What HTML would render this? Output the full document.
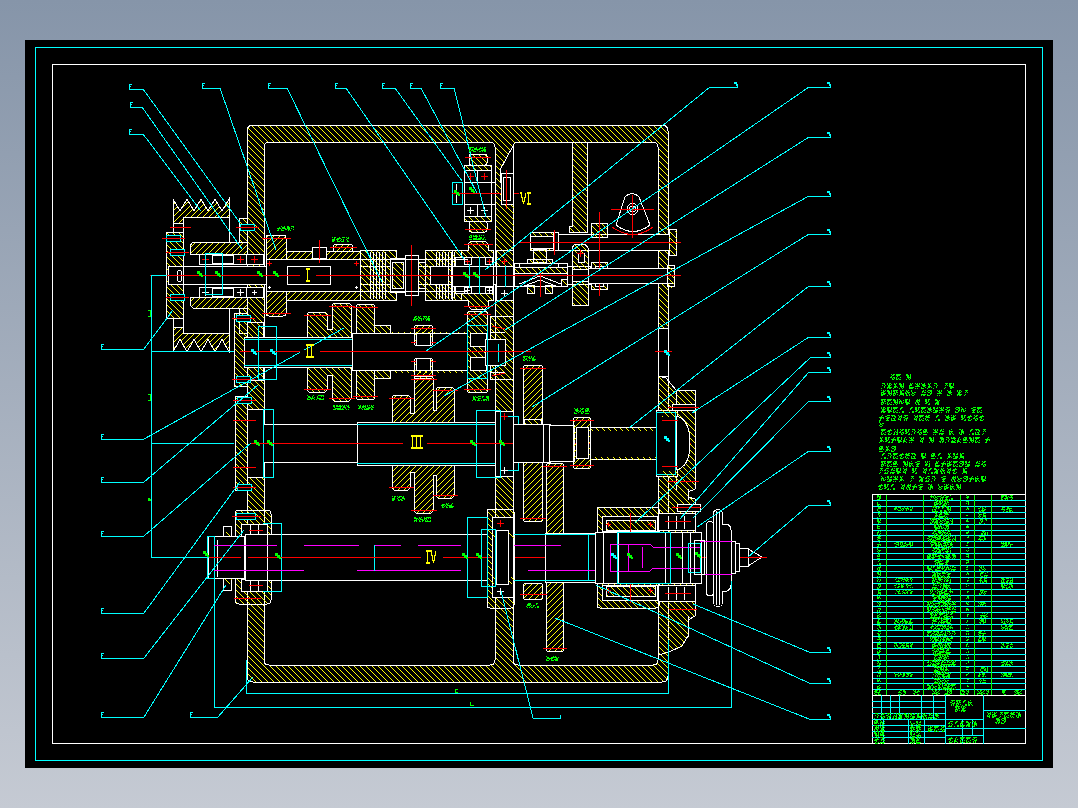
<!DOCTYPE html>
<html><head><meta charset="utf-8"><style>
html,body{margin:0;padding:0;width:1078px;height:808px;overflow:hidden;background:linear-gradient(to bottom,#8695a9 0%,#c5cad3 100%);}
svg{position:absolute;left:0;top:0;}
text{font-family:"Liberation Sans",sans-serif;}
</style></head><body>
<svg width="1078" height="808" viewBox="0 0 1078 808" shape-rendering="crispEdges">
<defs>
<pattern id="h" patternUnits="userSpaceOnUse" width="6" height="6"><rect x="0" y="0" width="1" height="1" fill="#ffff00"/><rect x="1" y="1" width="1" height="1" fill="#ffff00"/><rect x="2" y="2" width="1" height="1" fill="#ffff00"/><rect x="3" y="3" width="1" height="1" fill="#ffff00"/><rect x="4" y="4" width="1" height="1" fill="#ffff00"/><rect x="5" y="5" width="1" height="1" fill="#ffff00"/></pattern><pattern id="g" patternUnits="userSpaceOnUse" width="6" height="6"><rect x="5" y="0" width="1" height="1" fill="#ffff00"/><rect x="4" y="1" width="1" height="1" fill="#ffff00"/><rect x="3" y="2" width="1" height="1" fill="#ffff00"/><rect x="2" y="3" width="1" height="1" fill="#ffff00"/><rect x="1" y="4" width="1" height="1" fill="#ffff00"/><rect x="0" y="5" width="1" height="1" fill="#ffff00"/></pattern>
<path id="g0" d="M1 0h1v1h-1zM3 0h1v1h-1zM1 1h1v1h-1zM2 1h1v1h-1zM0 2h1v1h-1zM1 2h1v1h-1zM2 2h1v1h-1zM0 3h1v1h-1zM0 4h1v1h-1zM1 4h1v1h-1zM2 4h1v1h-1zM3 4h1v1h-1zM4 4h1v1h-1zM0 5h1v1h-1zM1 5h1v1h-1zM2 5h1v1h-1zM3 5h1v1h-1z" fill="#00ff00"/><path id="g1" d="M2 0h1v1h-1zM0 1h1v1h-1zM0 2h1v1h-1zM1 2h1v1h-1zM2 2h1v1h-1zM3 2h1v1h-1zM0 3h1v1h-1zM2 3h1v1h-1zM0 4h1v1h-1zM1 4h1v1h-1zM3 4h1v1h-1zM0 5h1v1h-1zM1 5h1v1h-1zM4 5h1v1h-1z" fill="#00ff00"/><path id="g2" d="M0 0h1v1h-1zM1 0h1v1h-1zM4 0h1v1h-1zM0 1h1v1h-1zM1 1h1v1h-1zM2 1h1v1h-1zM4 1h1v1h-1zM1 2h1v1h-1zM2 2h1v1h-1zM4 2h1v1h-1zM1 3h1v1h-1zM2 3h1v1h-1zM3 3h1v1h-1zM4 3h1v1h-1zM2 4h1v1h-1zM4 4h1v1h-1zM0 5h1v1h-1zM3 5h1v1h-1z" fill="#00ff00"/><path id="g3" d="M0 0h1v1h-1zM1 0h1v1h-1zM3 0h1v1h-1zM4 0h1v1h-1zM0 1h1v1h-1zM1 1h1v1h-1zM3 1h1v1h-1zM0 2h1v1h-1zM1 2h1v1h-1zM3 2h1v1h-1zM1 3h1v1h-1zM2 3h1v1h-1zM0 4h1v1h-1zM1 4h1v1h-1zM4 4h1v1h-1zM3 5h1v1h-1zM4 5h1v1h-1z" fill="#00ff00"/><path id="g4" d="M0 0h1v1h-1zM2 0h1v1h-1zM4 0h1v1h-1zM2 1h1v1h-1zM3 1h1v1h-1zM0 2h1v1h-1zM1 2h1v1h-1zM2 2h1v1h-1zM0 3h1v1h-1zM2 3h1v1h-1zM3 3h1v1h-1zM4 3h1v1h-1zM0 4h1v1h-1zM1 4h1v1h-1zM2 4h1v1h-1zM3 4h1v1h-1zM0 5h1v1h-1zM1 5h1v1h-1z" fill="#00ff00"/><path id="g5" d="M2 0h1v1h-1zM3 0h1v1h-1zM4 0h1v1h-1zM3 1h1v1h-1zM2 2h1v1h-1zM4 2h1v1h-1zM2 4h1v1h-1zM1 5h1v1h-1z" fill="#00ff00"/><path id="g6" d="M1 0h1v1h-1zM4 0h1v1h-1zM4 1h1v1h-1zM2 2h1v1h-1zM4 2h1v1h-1zM1 3h1v1h-1zM3 3h1v1h-1zM4 3h1v1h-1zM1 4h1v1h-1zM4 4h1v1h-1zM0 5h1v1h-1zM1 5h1v1h-1zM3 5h1v1h-1zM4 5h1v1h-1z" fill="#00ff00"/><path id="g7" d="M2 0h1v1h-1zM4 0h1v1h-1zM1 1h1v1h-1zM2 1h1v1h-1zM1 2h1v1h-1zM3 2h1v1h-1zM4 2h1v1h-1zM0 4h1v1h-1zM1 4h1v1h-1zM2 4h1v1h-1zM3 4h1v1h-1zM4 4h1v1h-1zM0 5h1v1h-1zM2 5h1v1h-1zM3 5h1v1h-1z" fill="#00ff00"/><path id="g8" d="M1 0h1v1h-1zM2 0h1v1h-1zM3 0h1v1h-1zM0 1h1v1h-1zM2 1h1v1h-1zM3 1h1v1h-1zM0 2h1v1h-1zM1 2h1v1h-1zM2 2h1v1h-1zM3 2h1v1h-1zM0 3h1v1h-1zM1 3h1v1h-1zM2 3h1v1h-1zM4 3h1v1h-1zM0 5h1v1h-1zM1 5h1v1h-1zM2 5h1v1h-1zM3 5h1v1h-1z" fill="#00ff00"/><path id="g9" d="M1 0h1v1h-1zM2 0h1v1h-1zM3 0h1v1h-1zM3 1h1v1h-1zM1 2h1v1h-1zM4 2h1v1h-1zM3 3h1v1h-1zM3 4h1v1h-1zM0 5h1v1h-1z" fill="#00ff00"/><path id="g10" d="M0 0h1v1h-1zM1 1h1v1h-1zM4 1h1v1h-1zM0 2h1v1h-1zM1 2h1v1h-1zM2 2h1v1h-1zM0 3h1v1h-1zM2 3h1v1h-1zM4 3h1v1h-1zM0 4h1v1h-1zM2 4h1v1h-1zM3 4h1v1h-1z" fill="#00ff00"/><path id="g11" d="M1 0h1v1h-1zM2 0h1v1h-1zM3 0h1v1h-1zM4 0h1v1h-1zM2 1h1v1h-1zM0 2h1v1h-1zM1 2h1v1h-1zM4 2h1v1h-1zM2 3h1v1h-1zM3 3h1v1h-1zM4 3h1v1h-1zM1 4h1v1h-1zM3 4h1v1h-1zM1 5h1v1h-1zM3 5h1v1h-1z" fill="#00ff00"/><path id="g12" d="M1 0h1v1h-1zM2 0h1v1h-1zM3 0h1v1h-1zM1 1h1v1h-1zM2 1h1v1h-1zM3 1h1v1h-1zM4 1h1v1h-1zM2 2h1v1h-1zM3 2h1v1h-1zM4 2h1v1h-1zM2 3h1v1h-1zM4 3h1v1h-1zM0 4h1v1h-1zM1 4h1v1h-1zM3 4h1v1h-1zM4 4h1v1h-1zM1 5h1v1h-1zM3 5h1v1h-1z" fill="#00ff00"/><path id="g13" d="M0 0h1v1h-1zM1 0h1v1h-1zM2 0h1v1h-1zM3 0h1v1h-1zM4 0h1v1h-1zM0 1h1v1h-1zM1 1h1v1h-1zM2 1h1v1h-1zM3 1h1v1h-1zM1 2h1v1h-1zM0 3h1v1h-1zM4 3h1v1h-1zM0 4h1v1h-1zM2 4h1v1h-1zM0 5h1v1h-1zM1 5h1v1h-1zM3 5h1v1h-1zM4 5h1v1h-1z" fill="#00ff00"/><path id="g14" d="M1 0h1v1h-1zM3 0h1v1h-1zM4 0h1v1h-1zM1 1h1v1h-1zM2 1h1v1h-1zM1 2h1v1h-1zM2 2h1v1h-1zM1 3h1v1h-1zM2 3h1v1h-1zM3 3h1v1h-1zM4 3h1v1h-1zM1 4h1v1h-1zM2 4h1v1h-1zM3 4h1v1h-1zM4 4h1v1h-1zM0 5h1v1h-1zM4 5h1v1h-1z" fill="#00ff00"/><path id="g15" d="M0 0h1v1h-1zM2 0h1v1h-1zM4 0h1v1h-1zM1 1h1v1h-1zM2 1h1v1h-1zM4 1h1v1h-1zM2 2h1v1h-1zM3 2h1v1h-1zM0 3h1v1h-1zM1 3h1v1h-1zM2 3h1v1h-1zM3 3h1v1h-1zM4 3h1v1h-1zM0 5h1v1h-1zM2 5h1v1h-1z" fill="#00ff00"/><path id="g16" d="M0 0h1v1h-1zM0 1h1v1h-1zM1 2h1v1h-1zM3 2h1v1h-1zM4 2h1v1h-1zM1 3h1v1h-1zM2 3h1v1h-1zM0 4h1v1h-1zM3 4h1v1h-1zM1 5h1v1h-1zM2 5h1v1h-1z" fill="#00ff00"/><path id="g17" d="M3 0h1v1h-1zM1 1h1v1h-1zM2 1h1v1h-1zM3 1h1v1h-1zM4 1h1v1h-1zM0 2h1v1h-1zM1 2h1v1h-1zM2 2h1v1h-1zM2 3h1v1h-1zM1 4h1v1h-1zM4 4h1v1h-1zM1 5h1v1h-1zM2 5h1v1h-1zM3 5h1v1h-1z" fill="#00ff00"/><path id="g18" d="M1 0h1v1h-1zM3 0h1v1h-1zM1 1h1v1h-1zM2 1h1v1h-1zM0 2h1v1h-1zM2 2h1v1h-1zM3 2h1v1h-1zM4 2h1v1h-1zM0 3h1v1h-1zM1 3h1v1h-1zM3 3h1v1h-1zM1 4h1v1h-1zM4 4h1v1h-1zM1 5h1v1h-1zM2 5h1v1h-1zM4 5h1v1h-1z" fill="#00ff00"/><path id="g19" d="M3 0h1v1h-1zM2 1h1v1h-1zM0 2h1v1h-1zM1 2h1v1h-1zM2 2h1v1h-1zM3 2h1v1h-1zM4 2h1v1h-1zM1 3h1v1h-1zM2 3h1v1h-1zM4 3h1v1h-1zM1 4h1v1h-1zM0 5h1v1h-1zM1 5h1v1h-1z" fill="#00ff00"/><path id="g20" d="M0 0h1v1h-1zM1 0h1v1h-1zM3 0h1v1h-1zM2 1h1v1h-1zM3 1h1v1h-1zM2 2h1v1h-1zM3 2h1v1h-1zM4 2h1v1h-1zM0 3h1v1h-1zM2 3h1v1h-1zM3 3h1v1h-1zM4 3h1v1h-1zM0 4h1v1h-1zM2 4h1v1h-1zM4 4h1v1h-1zM1 5h1v1h-1zM2 5h1v1h-1z" fill="#00ff00"/><path id="g21" d="M0 0h1v1h-1zM1 0h1v1h-1zM0 1h1v1h-1zM1 1h1v1h-1zM2 1h1v1h-1zM4 1h1v1h-1zM2 2h1v1h-1zM3 2h1v1h-1zM1 3h1v1h-1zM2 3h1v1h-1zM3 3h1v1h-1zM0 4h1v1h-1zM1 4h1v1h-1zM2 4h1v1h-1zM3 4h1v1h-1zM0 5h1v1h-1zM2 5h1v1h-1zM3 5h1v1h-1z" fill="#00ff00"/><path id="g22" d="M0 0h1v1h-1zM1 0h1v1h-1zM4 0h1v1h-1zM0 1h1v1h-1zM1 1h1v1h-1zM3 1h1v1h-1zM4 1h1v1h-1zM1 2h1v1h-1zM0 3h1v1h-1zM2 3h1v1h-1zM3 3h1v1h-1zM4 3h1v1h-1zM2 4h1v1h-1zM3 4h1v1h-1zM4 4h1v1h-1zM0 5h1v1h-1zM1 5h1v1h-1zM2 5h1v1h-1zM3 5h1v1h-1z" fill="#00ff00"/><path id="g23" d="M1 0h1v1h-1zM3 0h1v1h-1zM4 0h1v1h-1zM2 1h1v1h-1zM3 1h1v1h-1zM1 2h1v1h-1zM0 3h1v1h-1zM1 3h1v1h-1zM3 3h1v1h-1zM4 3h1v1h-1zM2 4h1v1h-1zM4 4h1v1h-1zM2 5h1v1h-1zM3 5h1v1h-1z" fill="#00ff00"/><path id="g24" d="M2 0h1v1h-1zM3 0h1v1h-1zM1 1h1v1h-1zM2 1h1v1h-1zM1 2h1v1h-1zM3 4h1v1h-1zM4 4h1v1h-1zM0 5h1v1h-1zM3 5h1v1h-1zM4 5h1v1h-1z" fill="#00ff00"/><path id="g25" d="M0 0h1v1h-1zM1 0h1v1h-1zM2 0h1v1h-1zM4 0h1v1h-1zM0 1h1v1h-1zM1 1h1v1h-1zM4 1h1v1h-1zM0 2h1v1h-1zM1 2h1v1h-1zM4 2h1v1h-1zM0 3h1v1h-1zM1 3h1v1h-1zM2 3h1v1h-1zM3 3h1v1h-1zM1 4h1v1h-1zM2 4h1v1h-1zM3 4h1v1h-1zM4 4h1v1h-1zM1 5h1v1h-1zM2 5h1v1h-1z" fill="#00ff00"/><path id="g26" d="M0 0h1v1h-1zM3 0h1v1h-1zM1 1h1v1h-1zM2 1h1v1h-1zM3 1h1v1h-1zM1 2h1v1h-1zM2 2h1v1h-1zM3 2h1v1h-1zM4 2h1v1h-1zM2 3h1v1h-1zM3 3h1v1h-1zM0 4h1v1h-1zM4 4h1v1h-1zM0 5h1v1h-1zM1 5h1v1h-1zM2 5h1v1h-1z" fill="#00ff00"/><path id="g27" d="M2 0h1v1h-1zM3 0h1v1h-1zM4 0h1v1h-1zM1 1h1v1h-1zM0 2h1v1h-1zM1 2h1v1h-1zM3 2h1v1h-1zM4 3h1v1h-1zM1 4h1v1h-1zM3 4h1v1h-1zM0 5h1v1h-1zM1 5h1v1h-1zM2 5h1v1h-1zM3 5h1v1h-1z" fill="#00ff00"/><path id="g28" d="M0 0h1v1h-1zM1 0h1v1h-1zM2 0h1v1h-1zM3 0h1v1h-1zM1 1h1v1h-1zM3 1h1v1h-1zM4 1h1v1h-1zM4 2h1v1h-1zM0 3h1v1h-1zM2 3h1v1h-1zM3 3h1v1h-1zM0 4h1v1h-1zM3 4h1v1h-1zM0 5h1v1h-1zM1 5h1v1h-1zM2 5h1v1h-1zM3 5h1v1h-1zM4 5h1v1h-1z" fill="#00ff00"/><path id="g29" d="M0 0h1v1h-1zM2 0h1v1h-1zM3 0h1v1h-1zM0 1h1v1h-1zM2 1h1v1h-1zM4 1h1v1h-1zM1 2h1v1h-1zM2 2h1v1h-1zM3 2h1v1h-1zM1 3h1v1h-1zM2 3h1v1h-1zM0 4h1v1h-1zM1 4h1v1h-1zM2 4h1v1h-1zM3 4h1v1h-1zM4 4h1v1h-1zM0 5h1v1h-1zM2 5h1v1h-1zM3 5h1v1h-1z" fill="#00ff00"/><path id="g30" d="M2 0h1v1h-1zM3 0h1v1h-1zM4 0h1v1h-1zM0 1h1v1h-1zM1 1h1v1h-1zM2 2h1v1h-1zM3 2h1v1h-1zM4 2h1v1h-1zM1 3h1v1h-1zM2 3h1v1h-1zM3 3h1v1h-1zM2 4h1v1h-1zM1 5h1v1h-1zM2 5h1v1h-1zM3 5h1v1h-1z" fill="#00ff00"/><path id="g31" d="M1 0h1v1h-1zM4 0h1v1h-1zM2 1h1v1h-1zM3 1h1v1h-1zM4 1h1v1h-1zM2 2h1v1h-1zM4 2h1v1h-1zM1 3h1v1h-1zM3 3h1v1h-1zM1 4h1v1h-1zM2 4h1v1h-1zM3 4h1v1h-1zM3 5h1v1h-1z" fill="#00ff00"/><path id="g32" d="M0 0h1v1h-1zM2 0h1v1h-1zM3 0h1v1h-1zM0 1h1v1h-1zM1 1h1v1h-1zM2 1h1v1h-1zM3 1h1v1h-1zM4 1h1v1h-1zM3 2h1v1h-1zM1 3h1v1h-1zM4 3h1v1h-1zM0 4h1v1h-1zM1 4h1v1h-1zM2 4h1v1h-1zM3 4h1v1h-1zM0 5h1v1h-1zM1 5h1v1h-1zM2 5h1v1h-1zM3 5h1v1h-1zM4 5h1v1h-1z" fill="#00ff00"/><path id="g33" d="M1 0h1v1h-1zM3 0h1v1h-1zM1 1h1v1h-1zM2 1h1v1h-1zM2 2h1v1h-1zM1 3h1v1h-1zM2 3h1v1h-1zM3 3h1v1h-1zM1 4h1v1h-1zM2 4h1v1h-1zM4 4h1v1h-1zM0 5h1v1h-1z" fill="#00ff00"/><path id="g34" d="M1 0h1v1h-1zM3 0h1v1h-1zM4 0h1v1h-1zM0 1h1v1h-1zM1 1h1v1h-1zM2 1h1v1h-1zM3 1h1v1h-1zM1 2h1v1h-1zM2 2h1v1h-1zM3 2h1v1h-1zM4 2h1v1h-1zM0 3h1v1h-1zM0 4h1v1h-1zM2 4h1v1h-1zM1 5h1v1h-1zM3 5h1v1h-1z" fill="#00ff00"/><path id="g35" d="M1 0h1v1h-1zM2 0h1v1h-1zM3 0h1v1h-1zM4 0h1v1h-1zM0 1h1v1h-1zM3 1h1v1h-1zM4 1h1v1h-1zM1 2h1v1h-1zM2 2h1v1h-1zM4 2h1v1h-1zM3 3h1v1h-1zM4 3h1v1h-1zM0 4h1v1h-1zM3 4h1v1h-1zM0 5h1v1h-1zM1 5h1v1h-1zM2 5h1v1h-1z" fill="#00ff00"/><path id="g36" d="M0 0h1v1h-1zM2 0h1v1h-1zM4 0h1v1h-1zM0 1h1v1h-1zM2 1h1v1h-1zM1 2h1v1h-1zM4 2h1v1h-1zM0 3h1v1h-1zM1 3h1v1h-1zM2 3h1v1h-1zM4 3h1v1h-1zM0 4h1v1h-1zM1 4h1v1h-1zM4 4h1v1h-1zM3 5h1v1h-1zM4 5h1v1h-1z" fill="#00ff00"/><path id="g37" d="M2 0h1v1h-1zM4 0h1v1h-1zM1 1h1v1h-1zM2 1h1v1h-1zM3 1h1v1h-1zM4 1h1v1h-1zM1 2h1v1h-1zM2 2h1v1h-1zM4 2h1v1h-1zM0 3h1v1h-1zM2 3h1v1h-1zM3 3h1v1h-1zM0 4h1v1h-1zM3 4h1v1h-1zM1 5h1v1h-1zM3 5h1v1h-1zM4 5h1v1h-1z" fill="#00ff00"/><path id="g38" d="M2 0h1v1h-1zM1 1h1v1h-1zM1 2h1v1h-1zM3 2h1v1h-1zM0 3h1v1h-1zM1 3h1v1h-1zM0 4h1v1h-1zM1 4h1v1h-1zM2 4h1v1h-1zM0 5h1v1h-1zM3 5h1v1h-1z" fill="#00ff00"/><path id="g39" d="M0 0h1v1h-1zM1 0h1v1h-1zM2 0h1v1h-1zM3 0h1v1h-1zM4 0h1v1h-1zM0 1h1v1h-1zM1 1h1v1h-1zM3 1h1v1h-1zM1 2h1v1h-1zM3 2h1v1h-1zM4 2h1v1h-1zM0 3h1v1h-1zM1 3h1v1h-1zM2 3h1v1h-1zM0 4h1v1h-1zM2 4h1v1h-1zM4 4h1v1h-1zM0 5h1v1h-1zM1 5h1v1h-1z" fill="#00ff00"/>
</defs>
<rect x="25" y="40" width="1028" height="728" fill="#000"/>
<rect x="35.5" y="47.5" width="1007" height="713" fill="none" stroke="#00ffff" stroke-width="1"/>
<rect x="52.5" y="64.5" width="973" height="679" fill="none" stroke="#ffffff" stroke-width="1"/>
<use href="#g23" x="890.0" y="373.8"/><use href="#g13" x="896.0" y="373.8"/><use href="#g2" x="906.0" y="373.8"/>
<use href="#g9" x="881.0" y="382.6"/><use href="#g29" x="887.0" y="382.6"/><use href="#g33" x="893.0" y="382.6"/><use href="#g2" x="899.0" y="382.6"/><use href="#g0" x="909.0" y="382.6"/><use href="#g15" x="915.0" y="382.6"/><use href="#g26" x="921.0" y="382.6"/><use href="#g33" x="927.0" y="382.6"/><use href="#g9" x="933.0" y="382.6"/><use href="#g5" x="943.0" y="382.6"/><use href="#g25" x="949.0" y="382.6"/>
<use href="#g4" x="881.0" y="390.4"/><use href="#g2" x="887.0" y="390.4"/><use href="#g39" x="893.0" y="390.4"/><use href="#g14" x="899.0" y="390.4"/><use href="#g18" x="905.0" y="390.4"/><use href="#g16" x="911.0" y="390.4"/><use href="#g7" x="921.0" y="390.4"/><use href="#g35" x="927.0" y="390.4"/><use href="#g15" x="937.0" y="390.4"/><use href="#g26" x="947.0" y="390.4"/><use href="#g29" x="957.0" y="390.4"/><use href="#g5" x="963.0" y="390.4"/>
<use href="#g39" x="881.0" y="398.6"/><use href="#g13" x="887.0" y="398.6"/><use href="#g2" x="893.0" y="398.6"/><use href="#g10" x="899.0" y="398.6"/><use href="#g25" x="905.0" y="398.6"/><use href="#g37" x="915.0" y="398.6"/><use href="#g3" x="925.0" y="398.6"/><use href="#g21" x="935.0" y="398.6"/>
<use href="#g29" x="881.0" y="406.7"/><use href="#g25" x="887.0" y="406.7"/><use href="#g13" x="893.0" y="406.7"/><use href="#g24" x="899.0" y="406.7"/><use href="#g24" x="909.0" y="406.7"/><use href="#g3" x="915.0" y="406.7"/><use href="#g13" x="921.0" y="406.7"/><use href="#g26" x="927.0" y="406.7"/><use href="#g22" x="933.0" y="406.7"/><use href="#g15" x="939.0" y="406.7"/><use href="#g11" x="945.0" y="406.7"/><use href="#g35" x="955.0" y="406.7"/><use href="#g10" x="961.0" y="406.7"/><use href="#g30" x="971.0" y="406.7"/><use href="#g13" x="977.0" y="406.7"/>
<use href="#g19" x="879.0" y="414.7"/><use href="#g30" x="885.0" y="414.7"/><use href="#g28" x="891.0" y="414.7"/><use href="#g31" x="897.0" y="414.7"/><use href="#g11" x="903.0" y="414.7"/><use href="#g31" x="913.0" y="414.7"/><use href="#g13" x="919.0" y="414.7"/><use href="#g34" x="925.0" y="414.7"/><use href="#g24" x="935.0" y="414.7"/><use href="#g26" x="945.0" y="414.7"/><use href="#g4" x="951.0" y="414.7"/><use href="#g3" x="961.0" y="414.7"/><use href="#g17" x="967.0" y="414.7"/><use href="#g23" x="973.0" y="414.7"/><use href="#g17" x="979.0" y="414.7"/>
<use href="#g16" x="879.0" y="421.1"/>
<use href="#g13" x="881.0" y="429.4"/><use href="#g17" x="887.0" y="429.4"/><use href="#g6" x="893.0" y="429.4"/><use href="#g23" x="899.0" y="429.4"/><use href="#g3" x="905.0" y="429.4"/><use href="#g9" x="911.0" y="429.4"/><use href="#g23" x="917.0" y="429.4"/><use href="#g8" x="923.0" y="429.4"/><use href="#g15" x="933.0" y="429.4"/><use href="#g7" x="939.0" y="429.4"/><use href="#g1" x="949.0" y="429.4"/><use href="#g20" x="959.0" y="429.4"/><use href="#g24" x="969.0" y="429.4"/><use href="#g28" x="975.0" y="429.4"/><use href="#g5" x="981.0" y="429.4"/>
<use href="#g33" x="879.0" y="437.2"/><use href="#g3" x="885.0" y="437.2"/><use href="#g19" x="891.0" y="437.2"/><use href="#g25" x="897.0" y="437.2"/><use href="#g38" x="903.0" y="437.2"/><use href="#g15" x="909.0" y="437.2"/><use href="#g31" x="919.0" y="437.2"/><use href="#g2" x="929.0" y="437.2"/><use href="#g12" x="939.0" y="437.2"/><use href="#g9" x="945.0" y="437.2"/><use href="#g32" x="951.0" y="437.2"/><use href="#g38" x="957.0" y="437.2"/><use href="#g8" x="963.0" y="437.2"/><use href="#g2" x="969.0" y="437.2"/><use href="#g13" x="975.0" y="437.2"/><use href="#g19" x="985.0" y="437.2"/>
<use href="#g8" x="879.0" y="445.7"/><use href="#g33" x="885.0" y="445.7"/><use href="#g35" x="891.0" y="445.7"/>
<use href="#g24" x="881.0" y="453.2"/><use href="#g9" x="887.0" y="453.2"/><use href="#g13" x="893.0" y="453.2"/><use href="#g17" x="899.0" y="453.2"/><use href="#g34" x="905.0" y="453.2"/><use href="#g28" x="911.0" y="453.2"/><use href="#g25" x="921.0" y="453.2"/><use href="#g8" x="931.0" y="453.2"/><use href="#g24" x="937.0" y="453.2"/><use href="#g33" x="947.0" y="453.2"/><use href="#g22" x="953.0" y="453.2"/><use href="#g14" x="959.0" y="453.2"/>
<use href="#g39" x="881.0" y="460.5"/><use href="#g13" x="887.0" y="460.5"/><use href="#g8" x="893.0" y="460.5"/><use href="#g2" x="903.0" y="460.5"/><use href="#g1" x="909.0" y="460.5"/><use href="#g30" x="915.0" y="460.5"/><use href="#g36" x="925.0" y="460.5"/><use href="#g0" x="935.0" y="460.5"/><use href="#g19" x="941.0" y="460.5"/><use href="#g4" x="947.0" y="460.5"/><use href="#g13" x="953.0" y="460.5"/><use href="#g35" x="959.0" y="460.5"/><use href="#g22" x="965.0" y="460.5"/><use href="#g7" x="975.0" y="460.5"/><use href="#g23" x="981.0" y="460.5"/>
<use href="#g5" x="878.0" y="468.4"/><use href="#g27" x="884.0" y="468.4"/><use href="#g7" x="890.0" y="468.4"/><use href="#g25" x="896.0" y="468.4"/><use href="#g31" x="902.0" y="468.4"/><use href="#g3" x="912.0" y="468.4"/><use href="#g31" x="922.0" y="468.4"/><use href="#g24" x="928.0" y="468.4"/><use href="#g21" x="934.0" y="468.4"/><use href="#g18" x="940.0" y="468.4"/><use href="#g31" x="946.0" y="468.4"/><use href="#g17" x="952.0" y="468.4"/><use href="#g14" x="962.0" y="468.4"/>
<use href="#g10" x="881.0" y="476.2"/><use href="#g22" x="887.0" y="476.2"/><use href="#g15" x="893.0" y="476.2"/><use href="#g33" x="899.0" y="476.2"/><use href="#g5" x="909.0" y="476.2"/><use href="#g21" x="919.0" y="476.2"/><use href="#g27" x="925.0" y="476.2"/><use href="#g9" x="931.0" y="476.2"/><use href="#g30" x="941.0" y="476.2"/><use href="#g37" x="951.0" y="476.2"/><use href="#g16" x="957.0" y="476.2"/><use href="#g35" x="963.0" y="476.2"/><use href="#g19" x="969.0" y="476.2"/><use href="#g1" x="975.0" y="476.2"/><use href="#g25" x="981.0" y="476.2"/>
<use href="#g17" x="878.0" y="484.4"/><use href="#g3" x="884.0" y="484.4"/><use href="#g24" x="890.0" y="484.4"/><use href="#g31" x="900.0" y="484.4"/><use href="#g37" x="906.0" y="484.4"/><use href="#g19" x="912.0" y="484.4"/><use href="#g30" x="918.0" y="484.4"/><use href="#g20" x="928.0" y="484.4"/><use href="#g16" x="938.0" y="484.4"/><use href="#g4" x="944.0" y="484.4"/><use href="#g1" x="950.0" y="484.4"/><use href="#g2" x="956.0" y="484.4"/>
<rect x="872" y="500" width="154" height="1" fill="#00ffff"/>
<rect x="872" y="506" width="154" height="1" fill="#00ffff"/>
<rect x="872" y="512" width="154" height="1" fill="#00ffff"/>
<rect x="872" y="518" width="154" height="1" fill="#00ffff"/>
<rect x="872" y="524" width="154" height="1" fill="#00ffff"/>
<rect x="872" y="530" width="154" height="1" fill="#00ffff"/>
<rect x="872" y="535" width="154" height="1" fill="#00ffff"/>
<rect x="872" y="541" width="154" height="1" fill="#00ffff"/>
<rect x="872" y="547" width="154" height="1" fill="#00ffff"/>
<rect x="872" y="553" width="154" height="1" fill="#00ffff"/>
<rect x="872" y="559" width="154" height="1" fill="#00ffff"/>
<rect x="872" y="565" width="154" height="1" fill="#00ffff"/>
<rect x="872" y="571" width="154" height="1" fill="#00ffff"/>
<rect x="872" y="577" width="154" height="1" fill="#00ffff"/>
<rect x="872" y="583" width="154" height="1" fill="#00ffff"/>
<rect x="872" y="589" width="154" height="1" fill="#00ffff"/>
<rect x="872" y="595" width="154" height="1" fill="#00ffff"/>
<rect x="872" y="601" width="154" height="1" fill="#00ffff"/>
<rect x="872" y="606" width="154" height="1" fill="#00ffff"/>
<rect x="872" y="612" width="154" height="1" fill="#00ffff"/>
<rect x="872" y="618" width="154" height="1" fill="#00ffff"/>
<rect x="872" y="624" width="154" height="1" fill="#00ffff"/>
<rect x="872" y="630" width="154" height="1" fill="#00ffff"/>
<rect x="872" y="636" width="154" height="1" fill="#00ffff"/>
<rect x="872" y="642" width="154" height="1" fill="#00ffff"/>
<rect x="872" y="648" width="154" height="1" fill="#00ffff"/>
<rect x="872" y="654" width="154" height="1" fill="#00ffff"/>
<rect x="872" y="660" width="154" height="1" fill="#00ffff"/>
<rect x="872" y="666" width="154" height="1" fill="#00ffff"/>
<rect x="872" y="672" width="154" height="1" fill="#00ffff"/>
<rect x="872" y="678" width="154" height="1" fill="#00ffff"/>
<rect x="872" y="683" width="154" height="1" fill="#00ffff"/>
<rect x="872" y="689" width="154" height="1" fill="#00ffff"/>
<rect x="886" y="494" width="1" height="202" fill="#00ff00"/>
<rect x="923" y="494" width="1" height="202" fill="#00ff00"/>
<rect x="960" y="494" width="1" height="202" fill="#00ff00"/>
<rect x="974" y="494" width="1" height="202" fill="#00ff00"/>
<rect x="991" y="494" width="1" height="202" fill="#00ff00"/>
<rect x="872" y="494" width="154" height="1" fill="#ffffff"/>
<rect x="872" y="494" width="1" height="250" fill="#ffffff"/>
<use href="#g22" transform="translate(877.0,495.0) scale(0.8)"/>
<use href="#g20" transform="translate(966.0,495.0) scale(0.6)"/>
<use href="#g19" transform="translate(929.6,494.5) scale(0.95)"/><use href="#g16" transform="translate(934.4,494.5) scale(0.95)"/><use href="#g11" transform="translate(939.1,494.5) scale(0.95)"/><use href="#g30" transform="translate(943.9,494.5) scale(0.95)"/><use href="#g24" transform="translate(948.6,494.5) scale(0.95)"/>
<use href="#g39" transform="translate(1001.0,495.0) scale(0.8)"/><use href="#g21" transform="translate(1005.0,495.0) scale(0.8)"/><use href="#g23" transform="translate(1009.0,495.0) scale(0.8)"/>
<use href="#g1" transform="translate(877.0,500.9) scale(0.8)"/>
<use href="#g36" transform="translate(966.0,500.9) scale(0.6)"/>
<use href="#g4" transform="translate(934.4,500.4) scale(0.95)"/><use href="#g3" transform="translate(939.1,500.4) scale(0.95)"/><use href="#g39" transform="translate(943.9,500.4) scale(0.95)"/>
<use href="#g34" transform="translate(877.0,506.8) scale(0.8)"/>
<use href="#g26" transform="translate(966.0,506.8) scale(0.6)"/>
<use href="#g17" transform="translate(978.0,506.8) scale(0.8)"/><use href="#g4" transform="translate(982.0,506.8) scale(0.8)"/>
<use href="#g28" transform="translate(932.0,506.3) scale(0.95)"/><use href="#g24" transform="translate(936.8,506.3) scale(0.95)"/><use href="#g24" transform="translate(941.5,506.3) scale(0.95)"/><use href="#g2" transform="translate(946.2,506.3) scale(0.95)"/>
<use href="#g8" transform="translate(894.0,506.8) scale(0.75)"/><use href="#g32" transform="translate(897.8,506.8) scale(0.75)"/><use href="#g17" transform="translate(901.5,506.8) scale(0.75)"/><use href="#g19" transform="translate(905.2,506.8) scale(0.75)"/><use href="#g31" transform="translate(909.0,506.8) scale(0.75)"/>
<use href="#g23" transform="translate(1001.0,506.8) scale(0.8)"/><use href="#g30" transform="translate(1005.0,506.8) scale(0.8)"/><use href="#g1" transform="translate(1009.0,506.8) scale(0.8)"/>
<use href="#g9" transform="translate(877.0,512.8) scale(0.8)"/>
<use href="#g38" transform="translate(966.0,512.8) scale(0.6)"/>
<use href="#g16" transform="translate(978.0,512.8) scale(0.8)"/><use href="#g14" transform="translate(982.0,512.8) scale(0.8)"/>
<use href="#g33" transform="translate(934.4,512.3) scale(0.95)"/><use href="#g0" transform="translate(939.1,512.3) scale(0.95)"/><use href="#g34" transform="translate(943.9,512.3) scale(0.95)"/>
<use href="#g25" transform="translate(877.0,518.7) scale(0.8)"/>
<use href="#g0" transform="translate(966.0,518.7) scale(0.6)"/>
<use href="#g35" transform="translate(979.0,518.7) scale(0.8)"/><use href="#g5" transform="translate(983.0,518.7) scale(0.8)"/>
<use href="#g35" transform="translate(929.6,518.2) scale(0.95)"/><use href="#g21" transform="translate(934.4,518.2) scale(0.95)"/><use href="#g16" transform="translate(939.1,518.2) scale(0.95)"/><use href="#g22" transform="translate(943.9,518.2) scale(0.95)"/><use href="#g6" transform="translate(948.6,518.2) scale(0.95)"/>
<use href="#g1" transform="translate(877.0,524.6) scale(0.8)"/>
<use href="#g20" transform="translate(966.0,524.6) scale(0.6)"/>
<use href="#g25" transform="translate(934.4,524.1) scale(0.95)"/><use href="#g10" transform="translate(939.1,524.1) scale(0.95)"/><use href="#g12" transform="translate(943.9,524.1) scale(0.95)"/>
<use href="#g10" transform="translate(877.0,530.5) scale(0.8)"/>
<use href="#g10" transform="translate(966.0,530.5) scale(0.6)"/>
<use href="#g31" transform="translate(980.0,530.5) scale(0.8)"/><use href="#g36" transform="translate(984.0,530.5) scale(0.8)"/>
<use href="#g23" transform="translate(932.0,530.0) scale(0.95)"/><use href="#g26" transform="translate(936.8,530.0) scale(0.95)"/><use href="#g18" transform="translate(941.5,530.0) scale(0.95)"/><use href="#g23" transform="translate(946.2,530.0) scale(0.95)"/>
<use href="#g34" transform="translate(877.0,536.4) scale(0.8)"/>
<use href="#g31" transform="translate(966.0,536.4) scale(0.6)"/>
<use href="#g23" transform="translate(978.0,536.4) scale(0.8)"/><use href="#g20" transform="translate(982.0,536.4) scale(0.8)"/>
<use href="#g11" transform="translate(927.2,535.9) scale(0.95)"/><use href="#g32" transform="translate(932.0,535.9) scale(0.95)"/><use href="#g8" transform="translate(936.8,535.9) scale(0.95)"/><use href="#g4" transform="translate(941.5,535.9) scale(0.95)"/><use href="#g4" transform="translate(946.2,535.9) scale(0.95)"/><use href="#g6" transform="translate(951.0,535.9) scale(0.95)"/>
<use href="#g19" transform="translate(877.0,542.4) scale(0.8)"/>
<use href="#g7" transform="translate(966.0,542.4) scale(0.6)"/>
<use href="#g30" transform="translate(929.6,541.9) scale(0.95)"/><use href="#g2" transform="translate(934.4,541.9) scale(0.95)"/><use href="#g10" transform="translate(939.1,541.9) scale(0.95)"/><use href="#g39" transform="translate(943.9,541.9) scale(0.95)"/><use href="#g26" transform="translate(948.6,541.9) scale(0.95)"/>
<use href="#g30" transform="translate(894.0,542.4) scale(0.75)"/><use href="#g3" transform="translate(897.8,542.4) scale(0.75)"/><use href="#g22" transform="translate(901.5,542.4) scale(0.75)"/><use href="#g16" transform="translate(905.2,542.4) scale(0.75)"/><use href="#g25" transform="translate(909.0,542.4) scale(0.75)"/>
<use href="#g32" transform="translate(1001.0,542.4) scale(0.8)"/><use href="#g25" transform="translate(1005.0,542.4) scale(0.8)"/><use href="#g16" transform="translate(1009.0,542.4) scale(0.8)"/>
<use href="#g16" transform="translate(877.0,548.3) scale(0.8)"/>
<use href="#g23" transform="translate(966.0,548.3) scale(0.6)"/>
<use href="#g11" transform="translate(932.0,547.8) scale(0.95)"/><use href="#g21" transform="translate(936.8,547.8) scale(0.95)"/><use href="#g13" transform="translate(941.5,547.8) scale(0.95)"/><use href="#g36" transform="translate(946.2,547.8) scale(0.95)"/>
<use href="#g8" transform="translate(877.0,554.2) scale(0.8)"/>
<use href="#g36" transform="translate(966.0,554.2) scale(0.6)"/>
<use href="#g8" transform="translate(927.2,553.7) scale(0.95)"/><use href="#g39" transform="translate(932.0,553.7) scale(0.95)"/><use href="#g17" transform="translate(936.8,553.7) scale(0.95)"/><use href="#g10" transform="translate(941.5,553.7) scale(0.95)"/><use href="#g8" transform="translate(946.2,553.7) scale(0.95)"/><use href="#g12" transform="translate(951.0,553.7) scale(0.95)"/>
<use href="#g24" transform="translate(877.0,560.1) scale(0.8)"/>
<use href="#g39" transform="translate(966.0,560.1) scale(0.6)"/>
<use href="#g11" transform="translate(934.4,559.6) scale(0.95)"/><use href="#g0" transform="translate(939.1,559.6) scale(0.95)"/><use href="#g30" transform="translate(943.9,559.6) scale(0.95)"/>
<use href="#g37" transform="translate(877.0,566.0) scale(0.8)"/>
<use href="#g8" transform="translate(966.0,566.0) scale(0.6)"/>
<use href="#g26" transform="translate(979.0,566.0) scale(0.8)"/><use href="#g16" transform="translate(983.0,566.0) scale(0.8)"/>
<use href="#g25" transform="translate(927.2,565.5) scale(0.95)"/><use href="#g24" transform="translate(932.0,565.5) scale(0.95)"/><use href="#g8" transform="translate(936.8,565.5) scale(0.95)"/><use href="#g3" transform="translate(941.5,565.5) scale(0.95)"/><use href="#g10" transform="translate(946.2,565.5) scale(0.95)"/><use href="#g7" transform="translate(951.0,565.5) scale(0.95)"/>
<use href="#g2" transform="translate(877.0,572.0) scale(0.8)"/>
<use href="#g12" transform="translate(966.0,572.0) scale(0.6)"/>
<use href="#g34" transform="translate(980.0,572.0) scale(0.8)"/><use href="#g7" transform="translate(984.0,572.0) scale(0.8)"/>
<use href="#g21" transform="translate(932.0,571.5) scale(0.95)"/><use href="#g1" transform="translate(936.8,571.5) scale(0.95)"/><use href="#g34" transform="translate(941.5,571.5) scale(0.95)"/><use href="#g30" transform="translate(946.2,571.5) scale(0.95)"/>
<use href="#g10" transform="translate(877.0,577.9) scale(0.8)"/>
<use href="#g23" transform="translate(966.0,577.9) scale(0.6)"/>
<use href="#g18" transform="translate(979.0,577.9) scale(0.8)"/><use href="#g14" transform="translate(983.0,577.9) scale(0.8)"/>
<use href="#g39" transform="translate(932.0,577.4) scale(0.95)"/><use href="#g26" transform="translate(936.8,577.4) scale(0.95)"/><use href="#g9" transform="translate(941.5,577.4) scale(0.95)"/><use href="#g36" transform="translate(946.2,577.4) scale(0.95)"/>
<use href="#g24" transform="translate(894.0,577.9) scale(0.75)"/><use href="#g13" transform="translate(897.8,577.9) scale(0.75)"/><use href="#g34" transform="translate(901.5,577.9) scale(0.75)"/><use href="#g18" transform="translate(905.2,577.9) scale(0.75)"/><use href="#g9" transform="translate(909.0,577.9) scale(0.75)"/>
<use href="#g28" transform="translate(1001.0,577.9) scale(0.8)"/><use href="#g11" transform="translate(1005.0,577.9) scale(0.8)"/><use href="#g6" transform="translate(1009.0,577.9) scale(0.8)"/>
<use href="#g35" transform="translate(877.0,583.8) scale(0.8)"/>
<use href="#g16" transform="translate(966.0,583.8) scale(0.6)"/>
<use href="#g7" transform="translate(932.0,583.3) scale(0.95)"/><use href="#g9" transform="translate(936.8,583.3) scale(0.95)"/><use href="#g20" transform="translate(941.5,583.3) scale(0.95)"/><use href="#g1" transform="translate(946.2,583.3) scale(0.95)"/>
<use href="#g17" transform="translate(894.0,583.8) scale(0.75)"/><use href="#g36" transform="translate(897.8,583.8) scale(0.75)"/><use href="#g36" transform="translate(901.5,583.8) scale(0.75)"/><use href="#g9" transform="translate(905.2,583.8) scale(0.75)"/><use href="#g17" transform="translate(909.0,583.8) scale(0.75)"/>
<use href="#g25" transform="translate(1001.0,583.8) scale(0.8)"/><use href="#g17" transform="translate(1005.0,583.8) scale(0.8)"/><use href="#g20" transform="translate(1009.0,583.8) scale(0.8)"/>
<use href="#g14" transform="translate(877.0,589.7) scale(0.8)"/>
<use href="#g5" transform="translate(966.0,589.7) scale(0.6)"/>
<use href="#g35" transform="translate(979.0,589.7) scale(0.8)"/><use href="#g16" transform="translate(983.0,589.7) scale(0.8)"/>
<use href="#g3" transform="translate(929.6,589.2) scale(0.95)"/><use href="#g9" transform="translate(934.4,589.2) scale(0.95)"/><use href="#g4" transform="translate(939.1,589.2) scale(0.95)"/><use href="#g0" transform="translate(943.9,589.2) scale(0.95)"/><use href="#g19" transform="translate(948.6,589.2) scale(0.95)"/>
<use href="#g5" transform="translate(894.0,589.7) scale(0.75)"/><use href="#g0" transform="translate(897.8,589.7) scale(0.75)"/><use href="#g11" transform="translate(901.5,589.7) scale(0.75)"/><use href="#g21" transform="translate(905.2,589.7) scale(0.75)"/><use href="#g30" transform="translate(909.0,589.7) scale(0.75)"/>
<use href="#g8" transform="translate(877.0,595.6) scale(0.8)"/>
<use href="#g12" transform="translate(966.0,595.6) scale(0.6)"/>
<use href="#g30" transform="translate(932.0,595.1) scale(0.95)"/><use href="#g2" transform="translate(936.8,595.1) scale(0.95)"/><use href="#g26" transform="translate(941.5,595.1) scale(0.95)"/><use href="#g22" transform="translate(946.2,595.1) scale(0.95)"/>
<use href="#g35" transform="translate(877.0,601.6) scale(0.8)"/>
<use href="#g25" transform="translate(966.0,601.6) scale(0.6)"/>
<use href="#g35" transform="translate(978.0,601.6) scale(0.8)"/><use href="#g39" transform="translate(982.0,601.6) scale(0.8)"/>
<use href="#g39" transform="translate(927.2,601.1) scale(0.95)"/><use href="#g16" transform="translate(932.0,601.1) scale(0.95)"/><use href="#g17" transform="translate(936.8,601.1) scale(0.95)"/><use href="#g12" transform="translate(941.5,601.1) scale(0.95)"/><use href="#g18" transform="translate(946.2,601.1) scale(0.95)"/><use href="#g15" transform="translate(951.0,601.1) scale(0.95)"/>
<use href="#g28" transform="translate(877.0,607.5) scale(0.8)"/>
<use href="#g36" transform="translate(966.0,607.5) scale(0.6)"/>
<use href="#g3" transform="translate(927.2,607.0) scale(0.95)"/><use href="#g11" transform="translate(932.0,607.0) scale(0.95)"/><use href="#g1" transform="translate(936.8,607.0) scale(0.95)"/><use href="#g10" transform="translate(941.5,607.0) scale(0.95)"/><use href="#g34" transform="translate(946.2,607.0) scale(0.95)"/><use href="#g7" transform="translate(951.0,607.0) scale(0.95)"/>
<use href="#g4" transform="translate(877.0,613.4) scale(0.8)"/>
<use href="#g17" transform="translate(966.0,613.4) scale(0.6)"/>
<use href="#g19" transform="translate(980.0,613.4) scale(0.8)"/><use href="#g4" transform="translate(984.0,613.4) scale(0.8)"/>
<use href="#g29" transform="translate(929.6,612.9) scale(0.95)"/><use href="#g0" transform="translate(934.4,612.9) scale(0.95)"/><use href="#g13" transform="translate(939.1,612.9) scale(0.95)"/><use href="#g4" transform="translate(943.9,612.9) scale(0.95)"/><use href="#g23" transform="translate(948.6,612.9) scale(0.95)"/>
<use href="#g0" transform="translate(877.0,619.3) scale(0.8)"/>
<use href="#g33" transform="translate(966.0,619.3) scale(0.6)"/>
<use href="#g31" transform="translate(978.0,619.3) scale(0.8)"/><use href="#g25" transform="translate(982.0,619.3) scale(0.8)"/>
<use href="#g34" transform="translate(932.0,618.8) scale(0.95)"/><use href="#g6" transform="translate(936.8,618.8) scale(0.95)"/><use href="#g30" transform="translate(941.5,618.8) scale(0.95)"/><use href="#g25" transform="translate(946.2,618.8) scale(0.95)"/>
<use href="#g26" transform="translate(894.0,619.3) scale(0.75)"/><use href="#g16" transform="translate(897.8,619.3) scale(0.75)"/><use href="#g39" transform="translate(901.5,619.3) scale(0.75)"/><use href="#g1" transform="translate(905.2,619.3) scale(0.75)"/><use href="#g0" transform="translate(909.0,619.3) scale(0.75)"/>
<use href="#g36" transform="translate(1001.0,619.3) scale(0.8)"/><use href="#g9" transform="translate(1005.0,619.3) scale(0.8)"/><use href="#g14" transform="translate(1009.0,619.3) scale(0.8)"/>
<use href="#g20" transform="translate(877.0,625.3) scale(0.8)"/>
<use href="#g24" transform="translate(966.0,625.3) scale(0.6)"/>
<use href="#g17" transform="translate(929.6,624.8) scale(0.95)"/><use href="#g23" transform="translate(934.4,624.8) scale(0.95)"/><use href="#g28" transform="translate(939.1,624.8) scale(0.95)"/><use href="#g22" transform="translate(943.9,624.8) scale(0.95)"/><use href="#g19" transform="translate(948.6,624.8) scale(0.95)"/>
<use href="#g17" transform="translate(894.0,625.3) scale(0.75)"/><use href="#g4" transform="translate(897.8,625.3) scale(0.75)"/><use href="#g20" transform="translate(901.5,625.3) scale(0.75)"/><use href="#g38" transform="translate(905.2,625.3) scale(0.75)"/><use href="#g6" transform="translate(909.0,625.3) scale(0.75)"/>
<use href="#g16" transform="translate(1001.0,625.3) scale(0.8)"/><use href="#g21" transform="translate(1005.0,625.3) scale(0.8)"/><use href="#g13" transform="translate(1009.0,625.3) scale(0.8)"/>
<use href="#g11" transform="translate(877.0,631.2) scale(0.8)"/>
<use href="#g13" transform="translate(966.0,631.2) scale(0.6)"/>
<use href="#g34" transform="translate(978.0,631.2) scale(0.8)"/><use href="#g19" transform="translate(982.0,631.2) scale(0.8)"/>
<use href="#g13" transform="translate(927.2,630.7) scale(0.95)"/><use href="#g11" transform="translate(932.0,630.7) scale(0.95)"/><use href="#g22" transform="translate(936.8,630.7) scale(0.95)"/><use href="#g6" transform="translate(941.5,630.7) scale(0.95)"/><use href="#g9" transform="translate(946.2,630.7) scale(0.95)"/><use href="#g9" transform="translate(951.0,630.7) scale(0.95)"/>
<use href="#g23" transform="translate(877.0,637.1) scale(0.8)"/>
<use href="#g22" transform="translate(966.0,637.1) scale(0.6)"/>
<use href="#g0" transform="translate(978.0,637.1) scale(0.8)"/><use href="#g25" transform="translate(982.0,637.1) scale(0.8)"/>
<use href="#g3" transform="translate(929.6,636.6) scale(0.95)"/><use href="#g25" transform="translate(934.4,636.6) scale(0.95)"/><use href="#g6" transform="translate(939.1,636.6) scale(0.95)"/><use href="#g20" transform="translate(943.9,636.6) scale(0.95)"/><use href="#g34" transform="translate(948.6,636.6) scale(0.95)"/>
<use href="#g13" transform="translate(877.0,643.0) scale(0.8)"/>
<use href="#g1" transform="translate(966.0,643.0) scale(0.6)"/>
<use href="#g4" transform="translate(932.0,642.5) scale(0.95)"/><use href="#g37" transform="translate(936.8,642.5) scale(0.95)"/><use href="#g6" transform="translate(941.5,642.5) scale(0.95)"/><use href="#g37" transform="translate(946.2,642.5) scale(0.95)"/>
<use href="#g20" transform="translate(894.0,643.0) scale(0.75)"/><use href="#g27" transform="translate(897.8,643.0) scale(0.75)"/><use href="#g30" transform="translate(901.5,643.0) scale(0.75)"/><use href="#g14" transform="translate(905.2,643.0) scale(0.75)"/><use href="#g31" transform="translate(909.0,643.0) scale(0.75)"/>
<use href="#g26" transform="translate(1001.0,643.0) scale(0.8)"/><use href="#g11" transform="translate(1005.0,643.0) scale(0.8)"/><use href="#g17" transform="translate(1009.0,643.0) scale(0.8)"/>
<use href="#g4" transform="translate(877.0,648.9) scale(0.8)"/>
<use href="#g24" transform="translate(966.0,648.9) scale(0.6)"/>
<use href="#g11" transform="translate(932.0,648.4) scale(0.95)"/><use href="#g22" transform="translate(936.8,648.4) scale(0.95)"/><use href="#g33" transform="translate(941.5,648.4) scale(0.95)"/><use href="#g0" transform="translate(946.2,648.4) scale(0.95)"/>
<use href="#g9" transform="translate(877.0,654.9) scale(0.8)"/>
<use href="#g24" transform="translate(966.0,654.9) scale(0.6)"/>
<use href="#g13" transform="translate(934.4,654.4) scale(0.95)"/><use href="#g39" transform="translate(939.1,654.4) scale(0.95)"/><use href="#g39" transform="translate(943.9,654.4) scale(0.95)"/>
<use href="#g22" transform="translate(877.0,660.8) scale(0.8)"/>
<use href="#g28" transform="translate(966.0,660.8) scale(0.6)"/>
<use href="#g27" transform="translate(927.2,660.3) scale(0.95)"/><use href="#g32" transform="translate(932.0,660.3) scale(0.95)"/><use href="#g36" transform="translate(936.8,660.3) scale(0.95)"/><use href="#g7" transform="translate(941.5,660.3) scale(0.95)"/><use href="#g7" transform="translate(946.2,660.3) scale(0.95)"/><use href="#g29" transform="translate(951.0,660.3) scale(0.95)"/>
<use href="#g27" transform="translate(1001.0,660.8) scale(0.8)"/><use href="#g29" transform="translate(1005.0,660.8) scale(0.8)"/><use href="#g26" transform="translate(1009.0,660.8) scale(0.8)"/>
<use href="#g24" transform="translate(877.0,666.7) scale(0.8)"/>
<use href="#g32" transform="translate(966.0,666.7) scale(0.6)"/>
<use href="#g34" transform="translate(980.0,666.7) scale(0.8)"/><use href="#g36" transform="translate(984.0,666.7) scale(0.8)"/>
<use href="#g32" transform="translate(934.4,666.2) scale(0.95)"/><use href="#g2" transform="translate(939.1,666.2) scale(0.95)"/><use href="#g33" transform="translate(943.9,666.2) scale(0.95)"/>
<use href="#g28" transform="translate(877.0,672.6) scale(0.8)"/>
<use href="#g28" transform="translate(966.0,672.6) scale(0.6)"/>
<use href="#g38" transform="translate(978.0,672.6) scale(0.8)"/><use href="#g3" transform="translate(982.0,672.6) scale(0.8)"/>
<use href="#g9" transform="translate(932.0,672.1) scale(0.95)"/><use href="#g34" transform="translate(936.8,672.1) scale(0.95)"/><use href="#g29" transform="translate(941.5,672.1) scale(0.95)"/><use href="#g21" transform="translate(946.2,672.1) scale(0.95)"/>
<use href="#g16" transform="translate(894.0,672.6) scale(0.75)"/><use href="#g39" transform="translate(897.8,672.6) scale(0.75)"/><use href="#g20" transform="translate(901.5,672.6) scale(0.75)"/><use href="#g12" transform="translate(905.2,672.6) scale(0.75)"/><use href="#g30" transform="translate(909.0,672.6) scale(0.75)"/>
<use href="#g35" transform="translate(1001.0,672.6) scale(0.8)"/><use href="#g25" transform="translate(1005.0,672.6) scale(0.8)"/><use href="#g3" transform="translate(1009.0,672.6) scale(0.8)"/>
<use href="#g8" transform="translate(877.0,678.5) scale(0.8)"/>
<use href="#g31" transform="translate(966.0,678.5) scale(0.6)"/>
<use href="#g9" transform="translate(978.0,678.5) scale(0.8)"/><use href="#g7" transform="translate(982.0,678.5) scale(0.8)"/>
<use href="#g32" transform="translate(934.4,678.0) scale(0.95)"/><use href="#g16" transform="translate(939.1,678.0) scale(0.95)"/><use href="#g16" transform="translate(943.9,678.0) scale(0.95)"/>
<use href="#g4" transform="translate(877.0,684.5) scale(0.8)"/>
<use href="#g11" transform="translate(966.0,684.5) scale(0.6)"/>
<use href="#g21" transform="translate(927.2,684.0) scale(0.95)"/><use href="#g16" transform="translate(932.0,684.0) scale(0.95)"/><use href="#g33" transform="translate(936.8,684.0) scale(0.95)"/><use href="#g22" transform="translate(941.5,684.0) scale(0.95)"/><use href="#g29" transform="translate(946.2,684.0) scale(0.95)"/><use href="#g13" transform="translate(951.0,684.0) scale(0.95)"/>
<use href="#g34" transform="translate(874.0,690.4) scale(0.8)"/><use href="#g0" transform="translate(878.0,690.4) scale(0.8)"/>
<use href="#g27" transform="translate(898.0,690.4) scale(0.8)"/><use href="#g12" transform="translate(902.0,690.4) scale(0.8)"/>
<use href="#g31" transform="translate(912.0,690.4) scale(0.8)"/><use href="#g17" transform="translate(916.0,690.4) scale(0.8)"/>
<use href="#g15" transform="translate(932.0,690.4) scale(0.8)"/><use href="#g4" transform="translate(936.0,690.4) scale(0.8)"/>
<use href="#g6" transform="translate(944.0,690.4) scale(0.8)"/><use href="#g35" transform="translate(948.0,690.4) scale(0.8)"/>
<use href="#g28" transform="translate(961.0,690.4) scale(0.8)"/><use href="#g31" transform="translate(965.0,690.4) scale(0.8)"/>
<use href="#g15" transform="translate(977.0,690.4) scale(0.8)"/><use href="#g4" transform="translate(981.0,690.4) scale(0.8)"/><use href="#g31" transform="translate(985.0,690.4) scale(0.8)"/>
<use href="#g3" transform="translate(1002.0,690.4) scale(0.8)"/>
<use href="#g35" transform="translate(1014.0,690.4) scale(0.8)"/><use href="#g4" transform="translate(1018.0,690.4) scale(0.8)"/>
<rect x="872" y="695" width="154" height="1" fill="#ffffff"/>
<rect x="872" y="701" width="74" height="1" fill="#00ffff"/>
<rect x="872" y="707" width="74" height="1" fill="#00ffff"/>
<rect x="872" y="713" width="74" height="1" fill="#00ffff"/>
<rect x="872" y="719" width="112" height="1" fill="#00ffff"/>
<rect x="872" y="725" width="74" height="1" fill="#00ffff"/>
<rect x="872" y="731" width="74" height="1" fill="#00ffff"/>
<rect x="872" y="737" width="74" height="1" fill="#00ffff"/>
<rect x="945" y="728" width="81" height="1" fill="#00ffff"/>
<rect x="945" y="735" width="39" height="1" fill="#00ffff"/>
<rect x="983" y="710" width="43" height="1" fill="#00ffff"/>
<rect x="881" y="695" width="1" height="25" fill="#00ffff"/>
<rect x="890" y="695" width="1" height="25" fill="#00ffff"/>
<rect x="899" y="695" width="1" height="25" fill="#00ffff"/>
<rect x="921" y="695" width="1" height="25" fill="#00ffff"/>
<rect x="933" y="695" width="1" height="25" fill="#00ffff"/>
<rect x="883" y="719" width="1" height="25" fill="#00ffff"/>
<rect x="908" y="719" width="1" height="25" fill="#00ffff"/>
<rect x="924" y="719" width="1" height="25" fill="#00ffff"/>
<rect x="945" y="695" width="1" height="49" fill="#00ffff"/>
<rect x="983" y="695" width="1" height="49" fill="#00ffff"/>
<rect x="962" y="719" width="1" height="25" fill="#00ffff"/>
<rect x="972" y="719" width="1" height="17" fill="#00ffff"/>
<use href="#g9" x="874.0" y="713.0"/><use href="#g23" x="880.0" y="713.0"/><use href="#g11" x="886.0" y="713.0"/><use href="#g6" x="892.0" y="713.0"/><use href="#g21" x="898.0" y="713.0"/><use href="#g2" x="904.0" y="713.0"/><use href="#g22" x="910.0" y="713.0"/><use href="#g14" x="916.0" y="713.0"/><use href="#g18" x="922.0" y="713.0"/><use href="#g7" x="928.0" y="713.0"/><use href="#g26" x="934.0" y="713.0"/>
<use href="#g11" x="950.0" y="700.0"/><use href="#g39" x="956.0" y="700.0"/><use href="#g24" x="962.0" y="700.0"/><use href="#g1" x="968.0" y="700.0"/>
<use href="#g39" x="955.0" y="706.0"/><use href="#g29" x="961.0" y="706.0"/>
<use href="#g31" x="986.0" y="712.0"/><use href="#g4" x="992.0" y="712.0"/><use href="#g5" x="998.0" y="712.0"/><use href="#g13" x="1004.0" y="712.0"/><use href="#g34" x="1010.0" y="712.0"/><use href="#g20" x="1016.0" y="712.0"/>
<use href="#g12" x="995.0" y="718.0"/><use href="#g35" x="1001.0" y="718.0"/>
<use href="#g27" x="948.0" y="721.0"/><use href="#g24" x="954.0" y="721.0"/><use href="#g0" x="960.0" y="721.0"/><use href="#g21" x="966.0" y="721.0"/><use href="#g20" x="972.0" y="721.0"/>
<use href="#g17" x="948.0" y="737.0"/><use href="#g38" x="954.0" y="737.0"/><use href="#g13" x="960.0" y="737.0"/><use href="#g13" x="966.0" y="737.0"/><use href="#g11" x="972.0" y="737.0"/>
<use href="#g8" x="874.0" y="720.0"/><use href="#g10" x="880.0" y="720.0"/>
<use href="#g37" x="874.0" y="726.0"/><use href="#g29" x="880.0" y="726.0"/>
<use href="#g2" x="874.0" y="732.0"/><use href="#g8" x="880.0" y="732.0"/>
<use href="#g17" x="874.0" y="738.0"/><use href="#g7" x="880.0" y="738.0"/>
<use href="#g16" x="910.0" y="721.0"/><use href="#g22" x="916.0" y="721.0"/>
<use href="#g39" x="910.0" y="727.0"/><use href="#g39" x="916.0" y="727.0"/>
<use href="#g22" x="910.0" y="733.0"/><use href="#g19" x="916.0" y="733.0"/>
<use href="#g12" x="910.0" y="738.0"/><use href="#g0" x="916.0" y="738.0"/>
<use href="#g4" x="928.0" y="726.0"/><use href="#g13" x="934.0" y="726.0"/><use href="#g23" x="940.0" y="726.0"/>
<path d="M253 125H662Q668 125 668 131V676Q668 682 662 682H253Q247 682 247 676V131Q247 125 253 125ZM269 142H490Q495 142 495 147V660Q495 665 490 665H269Q264 665 264 660V147Q264 142 269 142ZM518 142H653Q658 142 658 147V660Q658 665 653 665H518Q513 665 513 660V147Q513 142 518 142Z" fill="url(#h)" fill-rule="evenodd" stroke="#ffffff" stroke-width="1"/>
<path d="M572 142L587 142L587 232L569 232L569 226L572 226Z" fill="url(#h)" stroke="#ffffff" stroke-width="1"/>
<path d="M513 143L500 170L500 183L513 183Z" fill="#000" stroke="none" stroke-width="1"/>
<path d="M513 146 L500 170 V183" fill="none" stroke="#ffffff" stroke-width="1" />
<path d="M173 199L180 211L187 199L194 211L201 199L208 211L215 199L222 211L229 199L229 217L183 217L183 223L173 223Z" fill="url(#g)" stroke="#ffffff" stroke-width="1"/>
<path d="M173 351.6L180 339.6L187 351.6L194 339.6L201 351.6L208 339.6L215 351.6L222 339.6L229 351.6L229 333.6L183 333.6L183 327.6L173 327.6Z" fill="url(#g)" stroke="#ffffff" stroke-width="1"/>
<rect x="229" y="217" width="1" height="26" fill="#ffffff"/>
<rect x="229" y="308" width="1" height="27" fill="#ffffff"/>
<rect x="166.5" y="232.5" width="17" height="86" rx="0" fill="url(#h)" stroke="#ffffff" stroke-width="1"/>
<rect x="173.5" y="223.5" width="10" height="9" rx="0" fill="#000" stroke="#ffffff" stroke-width="1"/>
<rect x="173.5" y="318.5" width="10" height="9" rx="0" fill="#000" stroke="#ffffff" stroke-width="1"/>
<path d="M190 246L193 242L247 242L247 254L190 254Z" fill="url(#g)" stroke="#ffffff" stroke-width="1"/>
<path d="M190 305L193 308L247 308L247 297L190 297Z" fill="url(#g)" stroke="#ffffff" stroke-width="1"/>
<rect x="239.5" y="218.5" width="8" height="24" rx="0" fill="url(#h)" stroke="#ffffff" stroke-width="1"/>
<rect x="239.5" y="308.5" width="8" height="25" rx="0" fill="url(#h)" stroke="#ffffff" stroke-width="1"/>
<rect x="240.5" y="224.5" width="14" height="6" rx="0" fill="#000" stroke="#00ffff" stroke-width="1"/>
<rect x="236" y="227" width="23" height="1" fill="#ff0000"/>
<rect x="170.5" y="249.5" width="14" height="6" rx="0" fill="#000" stroke="#00ffff" stroke-width="1"/>
<rect x="166" y="252" width="23" height="1" fill="#ff0000"/>
<rect x="170.5" y="294.5" width="14" height="6" rx="0" fill="#000" stroke="#00ffff" stroke-width="1"/>
<rect x="166" y="297" width="23" height="1" fill="#ff0000"/>
<rect x="166.5" y="235.5" width="14" height="6" rx="0" fill="#000" stroke="#00ffff" stroke-width="1"/>
<rect x="162" y="238" width="23" height="1" fill="#ff0000"/>
<rect x="170" y="227" width="21" height="1" fill="#ff0000"/>
<rect x="199.5" y="254.5" width="64" height="10" rx="0" fill="#000" stroke="#ffffff" stroke-width="1"/>
<rect x="212.5" y="255.5" width="21" height="8" rx="0" fill="#000" stroke="#ffffff" stroke-width="1"/>
<rect x="246" y="254" width="1" height="11" fill="#ffffff"/>
<rect x="199.5" y="287.5" width="64" height="10" rx="0" fill="#000" stroke="#ffffff" stroke-width="1"/>
<rect x="212.5" y="288.5" width="21" height="8" rx="0" fill="#000" stroke="#ffffff" stroke-width="1"/>
<rect x="246" y="287" width="1" height="11" fill="#ffffff"/>
<rect x="202" y="292" width="7" height="1" fill="#ffffff"/>
<rect x="205" y="289" width="1" height="7" fill="#ffffff"/>
<rect x="237" y="292" width="7" height="1" fill="#ffffff"/>
<rect x="240" y="289" width="1" height="7" fill="#ffffff"/>
<rect x="252" y="292" width="5" height="1" fill="#ffffff"/>
<rect x="254" y="290" width="1" height="5" fill="#ffffff"/>
<rect x="202" y="259" width="7" height="1" fill="#ff0000"/>
<rect x="205" y="256" width="1" height="7" fill="#ff0000"/>
<rect x="237" y="259" width="7" height="1" fill="#ff0000"/>
<rect x="240" y="256" width="1" height="7" fill="#ff0000"/>
<rect x="251" y="259" width="7" height="1" fill="#ff0000"/>
<rect x="254" y="256" width="1" height="7" fill="#ff0000"/>
<rect x="183.5" y="266.5" width="407" height="18" rx="0" fill="#000" stroke="#ffffff" stroke-width="1"/>
<rect x="168.5" y="266.5" width="15" height="18" rx="0" fill="#000" stroke="#ffffff" stroke-width="1"/>
<rect x="177.5" y="270.5" width="4" height="11" rx="2" fill="none" stroke="#ffffff" stroke-width="1"/>
<rect x="205.5" y="253.5" width="17" height="41" rx="0" fill="none" stroke="#00ffff" stroke-width="1"/>
<path d="M269 235H283Q286 235 286 238V313Q286 316 283 316H269Q266 316 266 313V238Q266 235 269 235Z" fill="url(#g)" fill-rule="nonzero" stroke="#ffffff" stroke-width="1"/>
<rect x="286.5" y="251.5" width="74" height="8" rx="0" fill="url(#g)" stroke="#ffffff" stroke-width="1"/>
<rect x="286.5" y="291.5" width="74" height="9" rx="0" fill="url(#g)" stroke="#ffffff" stroke-width="1"/>
<rect x="266.5" y="259.5" width="94" height="32" rx="0" fill="#000" stroke="#ffffff" stroke-width="1"/>
<rect x="287.5" y="266.5" width="43" height="18" rx="0" fill="#000" stroke="#ffffff" stroke-width="1"/>
<rect x="333.5" y="244.5" width="19" height="7" rx="2" fill="url(#g)" stroke="#ffffff" stroke-width="1"/>
<rect x="262" y="238" width="29" height="1" fill="#ff0000"/>
<rect x="262" y="313" width="29" height="1" fill="#ff0000"/>
<rect x="330" y="247" width="27" height="1" fill="#ff0000"/>
<rect x="312.5" y="247.5" width="14" height="11" rx="0" fill="#000" stroke="#ffffff" stroke-width="1"/>
<rect x="319" y="240" width="1" height="23" fill="#ff0000"/>
<rect x="267" y="263" width="5" height="1" fill="#ff0000"/>
<rect x="269" y="261" width="1" height="5" fill="#ff0000"/>
<rect x="354" y="263" width="5" height="1" fill="#ff0000"/>
<rect x="356" y="261" width="1" height="5" fill="#ff0000"/>
<rect x="268" y="287" width="3" height="1" fill="#ffffff"/>
<rect x="269" y="286" width="1" height="3" fill="#ffffff"/>
<rect x="355" y="287" width="3" height="1" fill="#ffffff"/>
<rect x="356" y="286" width="1" height="3" fill="#ffffff"/>
<rect x="360.5" y="250.5" width="36" height="50" rx="0" fill="url(#h)" stroke="#ffffff" stroke-width="1"/>
<rect x="370" y="252" width="1" height="47" fill="#ffffff"/>
<rect x="373" y="252" width="1" height="47" fill="#ffffff"/>
<rect x="376" y="252" width="1" height="47" fill="#ffffff"/>
<rect x="379" y="252" width="1" height="47" fill="#ffffff"/>
<rect x="382" y="252" width="1" height="47" fill="#ffffff"/>
<rect x="385" y="252" width="1" height="47" fill="#ffffff"/>
<rect x="390.5" y="258.5" width="15" height="34" rx="0" fill="#000" stroke="#ffffff" stroke-width="1"/>
<rect x="392.5" y="262.5" width="11" height="26" rx="0" fill="url(#h)" stroke="#ffffff" stroke-width="1"/>
<rect x="405.5" y="255.5" width="13" height="40" rx="0" fill="#000" stroke="#ffffff" stroke-width="1"/>
<rect x="411" y="245" width="1" height="61" fill="#ff0000"/>
<rect x="418.5" y="262.5" width="7" height="26" rx="0" fill="url(#h)" stroke="#ffffff" stroke-width="1"/>
<rect x="425.5" y="250.5" width="36" height="50" rx="0" fill="url(#h)" stroke="#ffffff" stroke-width="1"/>
<rect x="436" y="252" width="1" height="47" fill="#ffffff"/>
<rect x="439" y="252" width="1" height="47" fill="#ffffff"/>
<rect x="442" y="252" width="1" height="47" fill="#ffffff"/>
<rect x="445" y="252" width="1" height="47" fill="#ffffff"/>
<rect x="448" y="252" width="1" height="47" fill="#ffffff"/>
<rect x="451" y="252" width="1" height="47" fill="#ffffff"/>
<rect x="454" y="252" width="1" height="47" fill="#ffffff"/>
<rect x="430.5" y="266.5" width="18" height="18" rx="0" fill="#000" stroke="#ffffff" stroke-width="1"/>
<rect x="460.5" y="258.5" width="8" height="34" rx="0" fill="#000" stroke="#ffffff" stroke-width="1"/>
<path d="M452 250L468 250L468 244L471 241L485 241L488 244L488 250L493 250L493 300L488 300L488 306L485 309L471 309L468 306L468 300L452 300Z" fill="url(#h)" stroke="#ffffff" stroke-width="1"/>
<rect x="455.5" y="257.5" width="38" height="36" rx="0" fill="#000" stroke="#ffffff" stroke-width="1"/>
<rect x="464.5" y="257.5" width="7" height="7" rx="0" fill="#000" stroke="#ffffff" stroke-width="1"/>
<rect x="485.5" y="257.5" width="7" height="7" rx="0" fill="#000" stroke="#ffffff" stroke-width="1"/>
<rect x="464.5" y="287.5" width="7" height="6" rx="0" fill="#000" stroke="#ffffff" stroke-width="1"/>
<rect x="485.5" y="287.5" width="7" height="6" rx="0" fill="#000" stroke="#ffffff" stroke-width="1"/>
<rect x="465" y="261" width="5" height="1" fill="#ff0000"/>
<rect x="467" y="259" width="1" height="5" fill="#ff0000"/>
<rect x="487" y="261" width="5" height="1" fill="#ff0000"/>
<rect x="489" y="259" width="1" height="5" fill="#ff0000"/>
<rect x="465" y="290" width="5" height="1" fill="#ffffff"/>
<rect x="467" y="288" width="1" height="5" fill="#ffffff"/>
<rect x="487" y="290" width="5" height="1" fill="#ffffff"/>
<rect x="489" y="288" width="1" height="5" fill="#ffffff"/>
<rect x="452.5" y="266.5" width="41" height="20" rx="0" fill="#000" stroke="#ffffff" stroke-width="1"/>
<rect x="469" y="264" width="1" height="24" fill="#00ffff"/>
<rect x="479" y="257" width="1" height="37" fill="#00ffff"/>
<rect x="464" y="244" width="29" height="1" fill="#ff0000"/>
<rect x="464" y="306" width="29" height="1" fill="#ff0000"/>
<rect x="496.5" y="250.5" width="17" height="16" rx="0" fill="url(#h)" stroke="#ffffff" stroke-width="1"/>
<rect x="501" y="261" width="7" height="1" fill="#ff0000"/>
<rect x="504" y="258" width="1" height="7" fill="#ff0000"/>
<rect x="496.5" y="266.5" width="17" height="20" rx="0" fill="#000" stroke="#ffffff" stroke-width="1"/>
<rect x="496.5" y="286.5" width="17" height="14" rx="0" fill="#000" stroke="#ffffff" stroke-width="1"/>
<rect x="501" y="293" width="7" height="1" fill="#ffffff"/>
<rect x="504" y="290" width="1" height="7" fill="#ffffff"/>
<rect x="505" y="266" width="1" height="21" fill="#00ffff"/>
<rect x="150" y="275" width="531" height="1" fill="#ff0000"/>
<rect x="234.5" y="313.5" width="13" height="73" rx="0" fill="url(#h)" stroke="#ffffff" stroke-width="1"/>
<rect x="247.5" y="322.5" width="16" height="16" rx="0" fill="url(#h)" stroke="#ffffff" stroke-width="1"/>
<rect x="247.5" y="365.5" width="16" height="15" rx="0" fill="url(#h)" stroke="#ffffff" stroke-width="1"/>
<rect x="244.5" y="339.5" width="16" height="25" rx="0" fill="#000" stroke="#ffffff" stroke-width="1"/>
<rect x="246.5" y="343.5" width="13" height="17" rx="0" fill="#000" stroke="#ffffff" stroke-width="1"/>
<rect x="236.5" y="315.5" width="14" height="6" rx="0" fill="#000" stroke="#00ffff" stroke-width="1"/>
<rect x="232" y="318" width="23" height="1" fill="#ff0000"/>
<rect x="236.5" y="376.5" width="14" height="6" rx="0" fill="#000" stroke="#00ffff" stroke-width="1"/>
<rect x="232" y="379" width="23" height="1" fill="#ff0000"/>
<rect x="244.5" y="337.5" width="223" height="30" rx="0" fill="#000" stroke="#ffffff" stroke-width="1"/>
<rect x="244" y="339" width="224" height="1" fill="#00ffff"/>
<rect x="244" y="365" width="224" height="1" fill="#00ffff"/>
<rect x="258.5" y="326.5" width="18" height="53" rx="0" fill="none" stroke="#00ffff" stroke-width="1"/>
<path d="M307 337L307 314L309 312L325 312L327 314L327 329L332 329L332 305L334 303L349 303L351 305L351 337Z" fill="url(#h)" stroke="#ffffff" stroke-width="1"/>
<path d="M307 367L307 390L309 392L325 392L327 390L327 375L332 375L332 399L334 401L349 401L351 399L351 367Z" fill="url(#h)" stroke="#ffffff" stroke-width="1"/>
<rect x="304" y="315" width="27" height="1" fill="#ff0000"/>
<rect x="304" y="389" width="27" height="1" fill="#ff0000"/>
<rect x="329" y="306" width="26" height="1" fill="#ff0000"/>
<rect x="329" y="398" width="26" height="1" fill="#ff0000"/>
<rect x="356.5" y="304.5" width="18" height="95" rx="2" fill="url(#h)" stroke="#ffffff" stroke-width="1"/>
<rect x="353" y="307" width="25" height="1" fill="#ff0000"/>
<rect x="353" y="396" width="25" height="1" fill="#ff0000"/>
<rect x="374.5" y="325.5" width="16" height="8" rx="0" fill="url(#h)" stroke="#ffffff" stroke-width="1"/>
<rect x="374.5" y="370.5" width="16" height="8" rx="0" fill="url(#h)" stroke="#ffffff" stroke-width="1"/>
<rect x="390.5" y="331.5" width="77" height="3" rx="0" fill="url(#h)" stroke="none" stroke-width="1"/>
<rect x="390.5" y="369.5" width="77" height="3" rx="0" fill="url(#h)" stroke="none" stroke-width="1"/>
<rect x="352.5" y="333.5" width="115" height="37" rx="0" fill="#000" stroke="#ffffff" stroke-width="1"/>
<rect x="414.5" y="325.5" width="18" height="20" rx="2" fill="url(#g)" stroke="#ffffff" stroke-width="1"/>
<rect x="411" y="328" width="25" height="1" fill="#ff0000"/>
<rect x="411" y="342" width="25" height="1" fill="#ff0000"/>
<rect x="414.5" y="358.5" width="18" height="20" rx="2" fill="url(#g)" stroke="#ffffff" stroke-width="1"/>
<rect x="411" y="361" width="25" height="1" fill="#ff0000"/>
<rect x="411" y="375" width="25" height="1" fill="#ff0000"/>
<rect x="416.5" y="333.5" width="14" height="12" rx="0" fill="#000" stroke="#ffffff" stroke-width="1"/>
<rect x="416.5" y="358.5" width="14" height="12" rx="0" fill="#000" stroke="#ffffff" stroke-width="1"/>
<rect x="467.5" y="311.5" width="20" height="81" rx="2" fill="url(#h)" stroke="#ffffff" stroke-width="1"/>
<rect x="464" y="314" width="27" height="1" fill="#ff0000"/>
<rect x="464" y="389" width="27" height="1" fill="#ff0000"/>
<rect x="470.5" y="333.5" width="16" height="13" rx="0" fill="#000" stroke="#ffffff" stroke-width="1"/>
<rect x="470.5" y="357.5" width="16" height="13" rx="0" fill="#000" stroke="#ffffff" stroke-width="1"/>
<rect x="490.5" y="316.5" width="23" height="63" rx="0" fill="url(#h)" stroke="#ffffff" stroke-width="1"/>
<rect x="485.5" y="339.5" width="20" height="26" rx="0" fill="#000" stroke="#ffffff" stroke-width="1"/>
<rect x="491" y="332" width="14" height="1" fill="#ffffff"/>
<rect x="491" y="372" width="14" height="1" fill="#ffffff"/>
<path d="M492 326 L505 329 M492 376 L505 373" fill="none" stroke="#ff0000" stroke-width="1" />
<rect x="467.5" y="325.5" width="20" height="53" rx="0" fill="none" stroke="#00ffff" stroke-width="1"/>
<rect x="498" y="344" width="1" height="18" fill="#00ffff"/>
<rect x="240" y="351.3" width="291" height="1" fill="#ff0000"/>
<rect x="235.5" y="396.5" width="12" height="94" rx="0" fill="url(#h)" stroke="#ffffff" stroke-width="1"/>
<rect x="247.5" y="409.5" width="16" height="68" rx="0" fill="#000" stroke="#ffffff" stroke-width="1"/>
<rect x="263.5" y="424.5" width="94" height="38" rx="0" fill="#000" stroke="#ffffff" stroke-width="1"/>
<rect x="263.5" y="409.5" width="10" height="68" rx="0" fill="none" stroke="#00ffff" stroke-width="1"/>
<rect x="237.5" y="397.5" width="14" height="6" rx="0" fill="#000" stroke="#00ffff" stroke-width="1"/>
<rect x="233" y="400" width="23" height="1" fill="#ff0000"/>
<rect x="237.5" y="484.5" width="14" height="6" rx="0" fill="#000" stroke="#00ffff" stroke-width="1"/>
<rect x="233" y="487" width="23" height="1" fill="#ff0000"/>
<rect x="233" y="420" width="23" height="1" fill="#ff0000"/>
<rect x="233" y="467" width="23" height="1" fill="#ff0000"/>
<path d="M392 422L392 397L394 395L408 395L410 397L410 413L414 413L414 378L416 376L431 376L433 378L433 410L436 410L436 389L438 387L452 387L454 389L454 422Z" fill="url(#g)" stroke="#ffffff" stroke-width="1"/>
<path d="M392 465L392 488L394 490L408 490L410 488L410 472L414 472L414 511L416 513L431 513L433 511L433 475L436 475L436 496L438 498L452 498L454 496L454 465Z" fill="url(#g)" stroke="#ffffff" stroke-width="1"/>
<rect x="389" y="398" width="25" height="1" fill="#ff0000"/>
<rect x="389" y="487" width="25" height="1" fill="#ff0000"/>
<rect x="411" y="379" width="26" height="1" fill="#ff0000"/>
<rect x="411" y="510" width="26" height="1" fill="#ff0000"/>
<rect x="433" y="390" width="25" height="1" fill="#ff0000"/>
<rect x="433" y="495" width="25" height="1" fill="#ff0000"/>
<rect x="357.5" y="422.5" width="138" height="43" rx="0" fill="#000" stroke="#ffffff" stroke-width="1"/>
<rect x="357" y="424" width="139" height="1" fill="#00ffff"/>
<rect x="357" y="463" width="139" height="1" fill="#00ffff"/>
<rect x="495.5" y="411.5" width="18" height="65" rx="0" fill="#000" stroke="#ffffff" stroke-width="1"/>
<rect x="476.5" y="410.5" width="24" height="67" rx="0" fill="none" stroke="#00ffff" stroke-width="1"/>
<rect x="500.5" y="416.5" width="18" height="54" rx="0" fill="none" stroke="#00ffff" stroke-width="1"/>
<rect x="501" y="416" width="7" height="1" fill="#ff0000"/>
<rect x="504" y="413" width="1" height="7" fill="#ff0000"/>
<rect x="501" y="470" width="7" height="1" fill="#ffffff"/>
<rect x="504" y="467" width="1" height="7" fill="#ffffff"/>
<rect x="250" y="443.4" width="441" height="1" fill="#ff0000"/>
<path d="M239 510H267Q271 510 271 514V600Q271 604 267 604H239Q235 604 235 600V514Q235 510 239 510Z" fill="url(#h)" fill-rule="nonzero" stroke="#ffffff" stroke-width="1"/>
<rect x="241.5" y="524.5" width="26" height="12" rx="0" fill="#000" stroke="#ffffff" stroke-width="1"/>
<rect x="241.5" y="579.5" width="26" height="12" rx="0" fill="#000" stroke="#ffffff" stroke-width="1"/>
<rect x="250" y="524" width="1" height="13" fill="#ffffff"/>
<rect x="250" y="579" width="1" height="13" fill="#ffffff"/>
<rect x="258" y="524" width="1" height="13" fill="#ffffff"/>
<rect x="258" y="579" width="1" height="13" fill="#ffffff"/>
<rect x="249" y="530" width="14" height="1" fill="#ff0000"/>
<rect x="249" y="585" width="14" height="1" fill="#ff0000"/>
<rect x="223.5" y="526.5" width="8" height="10" rx="0" fill="#000" stroke="#ffffff" stroke-width="1"/>
<rect x="223.5" y="578.5" width="8" height="12" rx="0" fill="#000" stroke="#ffffff" stroke-width="1"/>
<rect x="223.5" y="531.5" width="8" height="5" rx="0" fill="url(#h)" stroke="none" stroke-width="1"/>
<rect x="223.5" y="578.5" width="8" height="5" rx="0" fill="url(#h)" stroke="none" stroke-width="1"/>
<rect x="236.5" y="513.5" width="19" height="6" rx="0" fill="#000" stroke="#00ffff" stroke-width="1"/>
<rect x="232" y="516" width="29" height="1" fill="#ff0000"/>
<rect x="234" y="598" width="27" height="1" fill="#ff0000"/>
<rect x="208.5" y="536.5" width="37" height="42" rx="0" fill="#000" stroke="#ffffff" stroke-width="1"/>
<rect x="207.5" y="536.5" width="7" height="42" rx="0" fill="none" stroke="#00ffff" stroke-width="1"/>
<rect x="217" y="540" width="1" height="37" fill="#ffffff"/>
<rect x="244" y="537" width="1" height="41" fill="#ffffff"/>
<rect x="245.5" y="534.5" width="242" height="46" rx="0" fill="#000" stroke="#ffffff" stroke-width="1"/>
<rect x="267" y="534" width="1" height="47" fill="#ffffff"/>
<rect x="263" y="523" width="19" height="1" fill="#00ffff"/>
<rect x="281" y="523" width="1" height="69" fill="#00ffff"/>
<rect x="263" y="591" width="19" height="1" fill="#00ffff"/>
<rect x="214" y="545" width="63" height="1" fill="#ff00ff"/>
<rect x="304" y="545" width="55" height="1" fill="#ff00ff"/>
<rect x="214" y="570" width="90" height="1" fill="#ff00ff"/>
<rect x="357" y="570" width="104" height="1" fill="#ff00ff"/>
<rect x="375" y="545" width="26" height="1" fill="#ff00ff"/>
<rect x="418" y="545" width="43" height="1" fill="#ff00ff"/>
<rect x="374" y="545" width="1" height="26" fill="#00ffff"/>
<rect x="200" y="557" width="41" height="1" fill="#ff0000"/>
<rect x="248" y="557" width="463" height="1" fill="#ff0000"/>
<path d="M490 509H511Q514 509 514 512V605Q514 608 511 608H490Q487 608 487 605V512Q487 509 490 509Z" fill="url(#h)" fill-rule="nonzero" stroke="#ffffff" stroke-width="1"/>
<rect x="492.5" y="517.5" width="21" height="80" rx="0" fill="#000" stroke="#ffffff" stroke-width="1"/>
<rect x="496.5" y="530.5" width="12" height="54" rx="0" fill="#000" stroke="#ffffff" stroke-width="1"/>
<rect x="497" y="523" width="7" height="1" fill="#ff0000"/>
<rect x="500" y="520" width="1" height="7" fill="#ff0000"/>
<rect x="497" y="591" width="7" height="1" fill="#ffffff"/>
<rect x="500" y="588" width="1" height="7" fill="#ffffff"/>
<rect x="489.5" y="531.5" width="6" height="7" rx="0" fill="url(#h)" stroke="none" stroke-width="1"/>
<rect x="489.5" y="576.5" width="6" height="7" rx="0" fill="url(#h)" stroke="none" stroke-width="1"/>
<rect x="508.5" y="531.5" width="5" height="7" rx="0" fill="url(#h)" stroke="none" stroke-width="1"/>
<rect x="508.5" y="576.5" width="5" height="7" rx="0" fill="url(#h)" stroke="none" stroke-width="1"/>
<rect x="467.5" y="517.5" width="20" height="80" rx="0" fill="none" stroke="#00ffff" stroke-width="1"/>
<rect x="481.5" y="529.5" width="14" height="57" rx="0" fill="none" stroke="#00ffff" stroke-width="1"/>
<rect x="546.5" y="463.5" width="17" height="188" rx="2" fill="url(#g)" stroke="#ffffff" stroke-width="1"/>
<rect x="543" y="466" width="24" height="1" fill="#ff0000"/>
<rect x="543" y="648" width="24" height="1" fill="#ff0000"/>
<rect x="545.5" y="533.5" width="50" height="49" rx="0" fill="#000" stroke="#ffffff" stroke-width="1"/>
<rect x="514" y="534" width="81" height="1" fill="#00ffff"/>
<rect x="514" y="580" width="81" height="1" fill="#00ffff"/>
<rect x="588" y="534" width="1" height="47" fill="#00ffff"/>
<rect x="514" y="545" width="47" height="1" fill="#ff00ff"/>
<rect x="528" y="570" width="67" height="1" fill="#ff00ff"/>
<rect x="523.5" y="583.5" width="19" height="16" rx="2" fill="url(#g)" stroke="#ffffff" stroke-width="1"/>
<rect x="520" y="594" width="27" height="1" fill="#ff0000"/>
<path d="M600 507H656Q659 507 659 510V605Q659 608 656 608H600Q597 608 597 605V510Q597 507 600 507Z" fill="url(#h)" fill-rule="nonzero" stroke="#ffffff" stroke-width="1"/>
<rect x="602.5" y="516.5" width="55" height="15" rx="0" fill="#000" stroke="#ffffff" stroke-width="1"/>
<rect x="602.5" y="585.5" width="55" height="15" rx="0" fill="#000" stroke="#ffffff" stroke-width="1"/>
<rect x="606.5" y="520.5" width="49" height="10" rx="0" fill="url(#h)" stroke="#ffffff" stroke-width="1"/>
<rect x="606.5" y="586.5" width="49" height="10" rx="0" fill="url(#h)" stroke="#ffffff" stroke-width="1"/>
<rect x="630" y="513" width="1" height="23" fill="#ff0000"/>
<rect x="630" y="580" width="1" height="23" fill="#ff0000"/>
<rect x="606" y="524" width="5" height="1" fill="#ff0000"/>
<rect x="608" y="522" width="1" height="5" fill="#ff0000"/>
<rect x="648" y="524" width="5" height="1" fill="#ff0000"/>
<rect x="650" y="522" width="1" height="5" fill="#ff0000"/>
<rect x="606" y="590" width="5" height="1" fill="#ff0000"/>
<rect x="608" y="588" width="1" height="5" fill="#ff0000"/>
<rect x="648" y="590" width="5" height="1" fill="#ff0000"/>
<rect x="650" y="588" width="1" height="5" fill="#ff0000"/>
<path d="M658 376L666 378L676 390L695 390L695 489L688 492L688 497L695 499L695 616L688 620L688 636L682 646L669 652L658 655Z" fill="url(#h)" stroke="#ffffff" stroke-width="1"/>
<rect x="688" y="489" width="1" height="11" fill="#ffffff"/>
<rect x="688" y="616" width="1" height="21" fill="#ffffff"/>
<rect x="658.5" y="513.5" width="37" height="17" rx="0" fill="#000" stroke="#ffffff" stroke-width="1"/>
<rect x="658.5" y="585.5" width="37" height="16" rx="0" fill="#000" stroke="#ffffff" stroke-width="1"/>
<rect x="668" y="516" width="1" height="13" fill="#ffffff"/>
<rect x="668" y="587" width="1" height="13" fill="#ffffff"/>
<rect x="676" y="516" width="1" height="13" fill="#ffffff"/>
<rect x="676" y="587" width="1" height="13" fill="#ffffff"/>
<rect x="684" y="516" width="1" height="13" fill="#ffffff"/>
<rect x="684" y="587" width="1" height="13" fill="#ffffff"/>
<rect x="665" y="521" width="26" height="1" fill="#ff0000"/>
<rect x="665" y="593" width="26" height="1" fill="#ff0000"/>
<rect x="677.5" y="504.5" width="23" height="7" rx="0" fill="#000" stroke="#ffffff" stroke-width="1"/>
<rect x="672" y="507" width="29" height="1" fill="#ff0000"/>
<rect x="669" y="609" width="28" height="1" fill="#ff0000"/>
<rect x="595.5" y="532.5" width="106" height="51" rx="0" fill="#000" stroke="#ffffff" stroke-width="1"/>
<rect x="603" y="532" width="1" height="52" fill="#ffffff"/>
<rect x="618" y="532" width="1" height="52" fill="#ffffff"/>
<rect x="665" y="532" width="1" height="52" fill="#ffffff"/>
<rect x="682" y="532" width="1" height="52" fill="#ffffff"/>
<rect x="690" y="532" width="1" height="52" fill="#ffffff"/>
<path d="M610 544 H650 L653 547 H700 M610 571 H650 L653 568 H700 M610 544 V571 M628 544 V571 M642 547 V568" fill="none" stroke="#ff00ff" stroke-width="1" />
<rect x="617.5" y="532.5" width="53" height="51" rx="0" fill="none" stroke="#00ffff" stroke-width="1"/>
<rect x="688.5" y="543.5" width="12" height="29" rx="0" fill="none" stroke="#00ffff" stroke-width="1"/>
<rect x="706.5" y="521.5" width="7" height="74" rx="3" fill="#000" stroke="#ffffff" stroke-width="1"/>
<rect x="713.5" y="509.5" width="9" height="97" rx="4" fill="#000" stroke="#ffffff" stroke-width="1"/>
<rect x="716" y="511" width="1" height="94" fill="#ffffff"/>
<rect x="719" y="511" width="1" height="94" fill="#ffffff"/>
<path d="M722 524 H727 Q731 526 731 530 V585 Q731 589 727 591 H722" fill="#000" stroke="#ffffff" stroke-width="1" />
<rect x="731.5" y="541.5" width="4" height="32" rx="0" fill="#000" stroke="#ffffff" stroke-width="1"/>
<rect x="735.5" y="543.5" width="4" height="28" rx="0" fill="#000" stroke="#ffffff" stroke-width="1"/>
<rect x="739.5" y="548.5" width="9" height="18" rx="0" fill="#000" stroke="#ffffff" stroke-width="1"/>
<path d="M748 549 L762 557 L748 566" fill="none" stroke="#ffffff" stroke-width="1" />
<rect x="740" y="557" width="27" height="1" fill="#ff0000"/>
<rect x="700" y="541" width="32" height="1" fill="#ff00ff"/>
<rect x="700" y="574" width="32" height="1" fill="#ff00ff"/>
<rect x="694.5" y="540.5" width="10" height="34" rx="0" fill="none" stroke="#ffffff" stroke-width="1"/>
<rect x="523.5" y="365.5" width="19" height="156" rx="2" fill="url(#g)" stroke="#ffffff" stroke-width="1"/>
<rect x="520" y="368" width="26" height="1" fill="#ff0000"/>
<rect x="520" y="518" width="26" height="1" fill="#ff0000"/>
<rect x="523.5" y="419.5" width="19" height="12" rx="0" fill="#000" stroke="#ffffff" stroke-width="1"/>
<rect x="526.5" y="421.5" width="14" height="9" rx="0" fill="url(#h)" stroke="none" stroke-width="1"/>
<rect x="513.5" y="424.5" width="32" height="38" rx="0" fill="#000" stroke="#ffffff" stroke-width="1"/>
<rect x="524.5" y="419.5" width="17" height="5" rx="0" fill="url(#h)" stroke="#ffffff" stroke-width="1"/>
<rect x="543.5" y="424.5" width="7" height="38" rx="0" fill="#000" stroke="#ffffff" stroke-width="1"/>
<rect x="549.5" y="425.5" width="25" height="36" rx="0" fill="#000" stroke="#ffffff" stroke-width="1"/>
<rect x="573.5" y="417.5" width="17" height="51" rx="2" fill="url(#g)" stroke="#ffffff" stroke-width="1"/>
<rect x="570" y="420" width="24" height="1" fill="#ff0000"/>
<rect x="570" y="465" width="24" height="1" fill="#ff0000"/>
<rect x="576.5" y="427.5" width="12" height="31" rx="0" fill="#000" stroke="#ffffff" stroke-width="1"/>
<rect x="590.5" y="427.5" width="66" height="32" rx="0" fill="#000" stroke="#ffffff" stroke-width="1"/>
<rect x="590.5" y="427.5" width="66" height="3" rx="0" fill="url(#h)" stroke="none" stroke-width="1"/>
<rect x="590.5" y="456.5" width="66" height="3" rx="0" fill="url(#h)" stroke="none" stroke-width="1"/>
<rect x="676" y="390" width="1" height="100" fill="#ffffff"/>
<rect x="656.5" y="410.5" width="21" height="66" rx="0" fill="#000" stroke="#ffffff" stroke-width="1"/>
<rect x="656.5" y="412.5" width="19" height="62" rx="0" fill="none" stroke="#00ffff" stroke-width="1"/>
<path d="M676 416 Q690 419 690 443 Q690 467 676 470 Z" fill="#000" stroke="#ffffff" stroke-width="1" />
<rect x="661.5" y="406.5" width="16" height="10" rx="0" fill="url(#h)" stroke="none" stroke-width="1"/>
<rect x="661.5" y="470.5" width="16" height="10" rx="0" fill="url(#h)" stroke="none" stroke-width="1"/>
<rect x="672.5" y="404.5" width="23" height="6" rx="0" fill="#000" stroke="#ffffff" stroke-width="1"/>
<rect x="668" y="407" width="31" height="1" fill="#ff0000"/>
<rect x="668" y="481" width="31" height="1" fill="#ff0000"/>
<rect x="662" y="420" width="16" height="1" fill="#ff0000"/>
<rect x="662" y="466" width="16" height="1" fill="#ff0000"/>
<rect x="658.5" y="328.5" width="10" height="48" rx="0" fill="#000" stroke="#ffffff" stroke-width="1"/>
<rect x="655" y="351" width="17" height="1" fill="#ff0000"/>
<rect x="514.5" y="263.5" width="53" height="23" rx="0" fill="#000" stroke="#ffffff" stroke-width="1"/>
<rect x="514.5" y="267.5" width="53" height="6" rx="0" fill="url(#h)" stroke="#ffffff" stroke-width="1"/>
<rect x="519.5" y="263.5" width="39" height="4" rx="2" fill="#000" stroke="#ffffff" stroke-width="1"/>
<rect x="561.5" y="279.5" width="6" height="7" rx="0" fill="url(#h)" stroke="#ffffff" stroke-width="1"/>
<path d="M519 284 L540 276 L561 284 M524 286 L540 280 L556 286" fill="none" stroke="#ffffff" stroke-width="1" />
<rect x="527.5" y="285.5" width="7" height="8" rx="0" fill="url(#h)" stroke="#ffffff" stroke-width="1"/>
<rect x="545.5" y="285.5" width="7" height="8" rx="0" fill="url(#h)" stroke="#ffffff" stroke-width="1"/>
<rect x="540" y="272" width="1" height="25" fill="#ff0000"/>
<rect x="530.5" y="232.5" width="28" height="18" rx="0" fill="url(#h)" stroke="#ffffff" stroke-width="1"/>
<rect x="530.5" y="236.5" width="23" height="12" rx="0" fill="#000" stroke="#ffffff" stroke-width="1"/>
<rect x="553.5" y="232.5" width="5" height="18" rx="0" fill="#000" stroke="#ffffff" stroke-width="1"/>
<rect x="554" y="230" width="1" height="25" fill="#ff0000"/>
<rect x="533.5" y="249.5" width="13" height="13" rx="0" fill="url(#h)" stroke="#ffffff" stroke-width="1"/>
<rect x="527.5" y="259.5" width="25" height="4" rx="0" fill="url(#h)" stroke="#ffffff" stroke-width="1"/>
<rect x="558.5" y="234.5" width="117" height="16" rx="0" fill="#000" stroke="#ffffff" stroke-width="1"/>
<rect x="669.5" y="229.5" width="7" height="26" rx="0" fill="#000" stroke="#ffffff" stroke-width="1"/>
<rect x="669.5" y="230.5" width="7" height="24" rx="0" fill="url(#h)" stroke="none" stroke-width="1"/>
<rect x="518" y="242" width="163" height="1" fill="#ff0000"/>
<path d="M572 248L575 244L585 244L588 248L588 305L572 305Z" fill="url(#h)" stroke="#ffffff" stroke-width="1"/>
<rect x="572.5" y="269.5" width="16" height="12" rx="0" fill="#000" stroke="#ffffff" stroke-width="1"/>
<rect x="578.5" y="253.5" width="6" height="9" rx="0" fill="#000" stroke="#ffffff" stroke-width="1"/>
<rect x="577" y="253" width="7" height="1" fill="#ff0000"/>
<rect x="580" y="250" width="1" height="7" fill="#ff0000"/>
<rect x="591.5" y="223.5" width="16" height="14" rx="0" fill="url(#h)" stroke="#ffffff" stroke-width="1"/>
<rect x="591.5" y="262.5" width="16" height="27" rx="0" fill="url(#h)" stroke="#ffffff" stroke-width="1"/>
<rect x="595.5" y="266.5" width="8" height="20" rx="0" fill="#000" stroke="#ffffff" stroke-width="1"/>
<rect x="599" y="212" width="1" height="84" fill="#ff0000"/>
<rect x="588.5" y="268.5" width="86" height="15" rx="0" fill="#000" stroke="#ffffff" stroke-width="1"/>
<rect x="667.5" y="264.5" width="7" height="23" rx="0" fill="url(#h)" stroke="none" stroke-width="1"/>
<rect x="667.5" y="265.5" width="7" height="21" rx="0" fill="none" stroke="#ffffff" stroke-width="1"/>
<rect x="508" y="275" width="171" height="1" fill="#ff0000"/>
<path d="M616 225 L625 197 Q632 190 639 197 L650 225 Q633 238 616 225 Z" fill="none" stroke="#ffffff" stroke-width="1" />
<circle cx="632.5" cy="209" r="5.5" fill="none" stroke="#fff" stroke-width="1"/>
<circle cx="632.5" cy="209" r="3" fill="none" stroke="#fff" stroke-width="1"/>
<path d="M612 227 Q633 242 653 227" fill="none" stroke="#ff0000" stroke-width="1" />
<rect x="611" y="209" width="43" height="1" fill="#ff0000"/>
<rect x="632" y="195" width="1" height="43" fill="#ff0000"/>
<rect x="668.5" y="232.5" width="8" height="22" rx="0" fill="url(#h)" stroke="none" stroke-width="1"/>
<path d="M471 154H485Q487 154 487 156V163Q487 165 485 165H471Q469 165 469 163V156Q469 154 471 154Z" fill="url(#h)" fill-rule="nonzero" stroke="#ffffff" stroke-width="1"/>
<path d="M471 221H485Q487 221 487 223V230Q487 232 485 232H471Q469 232 469 230V223Q469 221 471 221Z" fill="url(#h)" fill-rule="nonzero" stroke="#ffffff" stroke-width="1"/>
<rect x="464.5" y="165.5" width="27" height="5" rx="0" fill="url(#h)" stroke="#ffffff" stroke-width="1"/>
<rect x="464.5" y="216.5" width="27" height="5" rx="0" fill="url(#h)" stroke="#ffffff" stroke-width="1"/>
<rect x="464.5" y="170.5" width="27" height="12" rx="0" fill="#000" stroke="#ffffff" stroke-width="1"/>
<rect x="464.5" y="204.5" width="27" height="12" rx="0" fill="#000" stroke="#ffffff" stroke-width="1"/>
<rect x="477" y="170" width="1" height="13" fill="#ffffff"/>
<rect x="477" y="204" width="1" height="13" fill="#ffffff"/>
<rect x="467" y="176" width="7" height="1" fill="#ff0000"/>
<rect x="470" y="173" width="1" height="7" fill="#ff0000"/>
<rect x="481" y="176" width="7" height="1" fill="#ff0000"/>
<rect x="484" y="173" width="1" height="7" fill="#ff0000"/>
<rect x="467" y="210" width="7" height="1" fill="#ffffff"/>
<rect x="470" y="207" width="1" height="7" fill="#ffffff"/>
<rect x="481" y="210" width="7" height="1" fill="#ffffff"/>
<rect x="484" y="207" width="1" height="7" fill="#ffffff"/>
<rect x="464.5" y="182.5" width="27" height="22" rx="0" fill="#000" stroke="#ffffff" stroke-width="1"/>
<rect x="452.5" y="182.5" width="10" height="22" rx="0" fill="none" stroke="#00ffff" stroke-width="1"/>
<rect x="456" y="184" width="1" height="19" fill="#ffffff"/>
<rect x="491.5" y="182.5" width="4" height="22" rx="0" fill="#000" stroke="#ffffff" stroke-width="1"/>
<rect x="465" y="157" width="26" height="1" fill="#ff0000"/>
<rect x="465" y="229" width="26" height="1" fill="#ff0000"/>
<rect x="452" y="193" width="67" height="1" fill="#ff0000"/>
<rect x="501.5" y="173.5" width="12" height="31" rx="0" fill="#000" stroke="#ffffff" stroke-width="1"/>
<rect x="503.5" y="177.5" width="7" height="23" rx="0" fill="#000" stroke="#ffffff" stroke-width="1"/>
<rect x="506" y="170" width="1" height="39" fill="#ff0000"/>
<rect x="495.5" y="204.5" width="18" height="28" rx="0" fill="url(#h)" stroke="none" stroke-width="1"/>
<path d="M129 86L129 89L143 89L240 223" fill="none" stroke="#00ffff" stroke-width="1"/>
<path d="M129 84h3v1h-2v1h1v1h-2z" fill="#00ffff"/>
<path d="M130 104L130 107L142 107L242 249" fill="none" stroke="#00ffff" stroke-width="1"/>
<path d="M130 102h3v1h-2v1h1v1h-2z" fill="#00ffff"/>
<path d="M129 131L129 134L143 134L201 211" fill="none" stroke="#00ffff" stroke-width="1"/>
<path d="M129 129h3v1h-2v1h1v1h-2z" fill="#00ffff"/>
<path d="M202 85L202 88L220 88L276 250" fill="none" stroke="#00ffff" stroke-width="1"/>
<path d="M202 83h3v1h-2v1h1v1h-2z" fill="#00ffff"/>
<path d="M268 85L268 88L287 88L382 282" fill="none" stroke="#00ffff" stroke-width="1"/>
<path d="M268 83h3v1h-2v1h1v1h-2z" fill="#00ffff"/>
<path d="M335 85L335 88L346 88L464 259" fill="none" stroke="#00ffff" stroke-width="1"/>
<path d="M335 83h3v1h-2v1h1v1h-2z" fill="#00ffff"/>
<path d="M382 85L382 88L395 88L462 181" fill="none" stroke="#00ffff" stroke-width="1"/>
<path d="M382 83h3v1h-2v1h1v1h-2z" fill="#00ffff"/>
<path d="M410 85L410 88L421 88L477 193" fill="none" stroke="#00ffff" stroke-width="1"/>
<path d="M410 83h3v1h-2v1h1v1h-2z" fill="#00ffff"/>
<path d="M440 85L440 88L454 88L486 217" fill="none" stroke="#00ffff" stroke-width="1"/>
<path d="M440 83h3v1h-2v1h1v1h-2z" fill="#00ffff"/>
<path d="M101 346L101 349L144 349L173 310" fill="none" stroke="#00ffff" stroke-width="1"/>
<path d="M101 344h3v1h-2v1h1v1h-2z" fill="#00ffff"/>
<path d="M101 436L101 439L144 439L344 328" fill="none" stroke="#00ffff" stroke-width="1"/>
<path d="M101 434h3v1h-2v1h1v1h-2z" fill="#00ffff"/>
<path d="M101 479L101 482L144 482L258 385" fill="none" stroke="#00ffff" stroke-width="1"/>
<path d="M101 477h3v1h-2v1h1v1h-2z" fill="#00ffff"/>
<path d="M101 533L101 536L144 536L251 443" fill="none" stroke="#00ffff" stroke-width="1"/>
<path d="M101 531h3v1h-2v1h1v1h-2z" fill="#00ffff"/>
<path d="M101 610L101 613L144 613L240 482" fill="none" stroke="#00ffff" stroke-width="1"/>
<path d="M101 608h3v1h-2v1h1v1h-2z" fill="#00ffff"/>
<path d="M101 655L101 658L144 658L244 530" fill="none" stroke="#00ffff" stroke-width="1"/>
<path d="M101 653h3v1h-2v1h1v1h-2z" fill="#00ffff"/>
<path d="M101 714L101 717L144 717L226 585" fill="none" stroke="#00ffff" stroke-width="1"/>
<path d="M101 712h3v1h-2v1h1v1h-2z" fill="#00ffff"/>
<path d="M190 714L190 717L218 717L253 677" fill="none" stroke="#00ffff" stroke-width="1"/>
<path d="M190 712h3v1h-2v1h1v1h-2z" fill="#00ffff"/>
<path d="M737 84L737 87L710 87L485 270" fill="none" stroke="#00ffff" stroke-width="1"/>
<path d="M734 82h3v4h-1v-2h-2z" fill="#00ffff"/>
<path d="M830 84L830 87L809 87L426 351" fill="none" stroke="#00ffff" stroke-width="1"/>
<path d="M827 82h3v4h-1v-2h-2z" fill="#00ffff"/>
<path d="M830 134L830 137L809 137L505 330" fill="none" stroke="#00ffff" stroke-width="1"/>
<path d="M827 132h3v4h-1v-2h-2z" fill="#00ffff"/>
<path d="M830 193L830 196L809 196L444 396" fill="none" stroke="#00ffff" stroke-width="1"/>
<path d="M827 191h3v4h-1v-2h-2z" fill="#00ffff"/>
<path d="M830 231L830 234L809 234L532 407" fill="none" stroke="#00ffff" stroke-width="1"/>
<path d="M827 229h3v4h-1v-2h-2z" fill="#00ffff"/>
<path d="M830 283L830 286L809 286L629 428" fill="none" stroke="#00ffff" stroke-width="1"/>
<path d="M827 281h3v4h-1v-2h-2z" fill="#00ffff"/>
<path d="M830 334L830 337L809 337L692 413" fill="none" stroke="#00ffff" stroke-width="1"/>
<path d="M827 332h3v4h-1v-2h-2z" fill="#00ffff"/>
<path d="M830 354L830 357L811 357L635 523" fill="none" stroke="#00ffff" stroke-width="1"/>
<path d="M827 352h3v4h-1v-2h-2z" fill="#00ffff"/>
<path d="M830 369L830 372L809 372L680 519" fill="none" stroke="#00ffff" stroke-width="1"/>
<path d="M827 367h3v4h-1v-2h-2z" fill="#00ffff"/>
<path d="M830 398L830 401L809 401L693 518" fill="none" stroke="#00ffff" stroke-width="1"/>
<path d="M827 396h3v4h-1v-2h-2z" fill="#00ffff"/>
<path d="M830 448L830 451L809 451L697 527" fill="none" stroke="#00ffff" stroke-width="1"/>
<path d="M827 446h3v4h-1v-2h-2z" fill="#00ffff"/>
<path d="M830 502L830 505L809 505L748 557" fill="none" stroke="#00ffff" stroke-width="1"/>
<path d="M827 500h3v4h-1v-2h-2z" fill="#00ffff"/>
<path d="M830 649L830 652L809 652L693 604" fill="none" stroke="#00ffff" stroke-width="1"/>
<path d="M827 647h3v4h-1v-2h-2z" fill="#00ffff"/>
<path d="M830 680L830 683L809 683L596 585" fill="none" stroke="#00ffff" stroke-width="1"/>
<path d="M827 678h3v4h-1v-2h-2z" fill="#00ffff"/>
<path d="M830 716L830 719L809 719L555 618" fill="none" stroke="#00ffff" stroke-width="1"/>
<path d="M827 714h3v4h-1v-2h-2z" fill="#00ffff"/>
<path d="M560 715L560 718L533 718L501 591" fill="none" stroke="#00ffff" stroke-width="1"/>
<rect x="151" y="275" width="1" height="283" fill="#00ffff"/>
<rect x="151" y="275" width="16" height="1" fill="#00ffff"/>
<rect x="151" y="351" width="83" height="1" fill="#00ffff"/>
<rect x="151" y="443" width="83" height="1" fill="#00ffff"/>
<rect x="151" y="557" width="58" height="1" fill="#00ffff"/>
<rect x="246" y="693" width="423" height="1" fill="#00ffff"/>
<rect x="246" y="660" width="1" height="34" fill="#00ffff"/>
<rect x="668" y="640" width="1" height="54" fill="#00ffff"/>
<rect x="214" y="707" width="518" height="1" fill="#00ffff"/>
<rect x="214" y="578" width="1" height="130" fill="#00ffff"/>
<rect x="731" y="581" width="1" height="127" fill="#00ffff"/>
<use href="#g19" transform="translate(277.0,226.0) scale(0.8333333333333334)"/><use href="#g26" transform="translate(281.4,226.0) scale(0.8333333333333334)"/><use href="#g12" transform="translate(285.8,226.0) scale(0.8333333333333334)"/><use href="#g9" transform="translate(290.3,226.0) scale(0.8333333333333334)"/>
<use href="#g4" transform="translate(332.0,237.0) scale(0.8333333333333334)"/><use href="#g17" transform="translate(336.4,237.0) scale(0.8333333333333334)"/><use href="#g27" transform="translate(340.8,237.0) scale(0.8333333333333334)"/><use href="#g23" transform="translate(345.3,237.0) scale(0.8333333333333334)"/>
<use href="#g39" transform="translate(469.0,147.0) scale(0.8333333333333334)"/><use href="#g26" transform="translate(473.4,147.0) scale(0.8333333333333334)"/><use href="#g17" transform="translate(477.8,147.0) scale(0.8333333333333334)"/><use href="#g29" transform="translate(482.3,147.0) scale(0.8333333333333334)"/>
<use href="#g8" transform="translate(469.0,235.0) scale(0.8333333333333334)"/><use href="#g32" transform="translate(473.4,235.0) scale(0.8333333333333334)"/><use href="#g7" transform="translate(477.8,235.0) scale(0.8333333333333334)"/><use href="#g6" transform="translate(482.3,235.0) scale(0.8333333333333334)"/>
<use href="#g22" transform="translate(333.0,405.0) scale(0.8333333333333334)"/><use href="#g32" transform="translate(337.4,405.0) scale(0.8333333333333334)"/><use href="#g26" transform="translate(341.8,405.0) scale(0.8333333333333334)"/><use href="#g15" transform="translate(346.3,405.0) scale(0.8333333333333334)"/>
<use href="#g31" transform="translate(357.0,405.0) scale(0.8333333333333334)"/><use href="#g37" transform="translate(361.4,405.0) scale(0.8333333333333334)"/><use href="#g7" transform="translate(365.8,405.0) scale(0.8333333333333334)"/><use href="#g18" transform="translate(370.3,405.0) scale(0.8333333333333334)"/>
<use href="#g7" transform="translate(413.0,316.0) scale(0.8333333333333334)"/><use href="#g18" transform="translate(417.4,316.0) scale(0.8333333333333334)"/><use href="#g5" transform="translate(421.8,316.0) scale(0.8333333333333334)"/><use href="#g29" transform="translate(426.3,316.0) scale(0.8333333333333334)"/>
<use href="#g14" transform="translate(472.0,396.0) scale(0.8333333333333334)"/><use href="#g30" transform="translate(476.4,396.0) scale(0.8333333333333334)"/><use href="#g24" transform="translate(480.8,396.0) scale(0.8333333333333334)"/><use href="#g12" transform="translate(485.3,396.0) scale(0.8333333333333334)"/>
<use href="#g26" transform="translate(307.0,395.0) scale(0.8333333333333334)"/><use href="#g38" transform="translate(311.4,395.0) scale(0.8333333333333334)"/><use href="#g14" transform="translate(315.8,395.0) scale(0.8333333333333334)"/><use href="#g28" transform="translate(320.3,395.0) scale(0.8333333333333334)"/>
<use href="#g4" transform="translate(392.0,496.0) scale(0.8333333333333334)"/><use href="#g23" transform="translate(396.4,496.0) scale(0.8333333333333334)"/><use href="#g26" transform="translate(400.8,496.0) scale(0.8333333333333334)"/>
<use href="#g21" transform="translate(414.0,517.0) scale(0.8333333333333334)"/><use href="#g18" transform="translate(418.4,517.0) scale(0.8333333333333334)"/><use href="#g37" transform="translate(422.8,517.0) scale(0.8333333333333334)"/><use href="#g28" transform="translate(427.3,517.0) scale(0.8333333333333334)"/>
<use href="#g17" transform="translate(441.0,503.0) scale(0.8333333333333334)"/><use href="#g18" transform="translate(445.4,503.0) scale(0.8333333333333334)"/><use href="#g0" transform="translate(449.8,503.0) scale(0.8333333333333334)"/>
<use href="#g39" transform="translate(523.0,356.0) scale(0.8333333333333334)"/><use href="#g15" transform="translate(527.4,356.0) scale(0.8333333333333334)"/><use href="#g0" transform="translate(531.8,356.0) scale(0.8333333333333334)"/>
<use href="#g26" x="574.0" y="408.0"/><use href="#g23" x="579.3" y="408.0"/><use href="#g8" x="584.6" y="408.0"/>
<use href="#g37" transform="translate(526.0,603.0) scale(0.8333333333333334)"/><use href="#g16" transform="translate(530.4,603.0) scale(0.8333333333333334)"/><use href="#g24" transform="translate(534.8,603.0) scale(0.8333333333333334)"/>
<use href="#g26" transform="translate(546.0,656.0) scale(0.8333333333333334)"/><use href="#g17" transform="translate(550.4,656.0) scale(0.8333333333333334)"/><use href="#g21" transform="translate(554.8,656.0) scale(0.8333333333333334)"/>
<path d="M197 271h3v2h2v2h1v2h-2v-1h-2v-2h-2z" fill="#00ff00"/>
<path d="M215 271h3v2h2v2h1v2h-2v-1h-2v-2h-2z" fill="#00ff00"/>
<path d="M257 271h3v2h2v2h1v2h-2v-1h-2v-2h-2z" fill="#00ff00"/>
<path d="M273 271h3v2h2v2h1v2h-2v-1h-2v-2h-2z" fill="#00ff00"/>
<path d="M463 272h3v2h2v2h1v2h-2v-1h-2v-2h-2z" fill="#00ff00"/>
<path d="M473 272h3v2h2v2h1v2h-2v-1h-2v-2h-2z" fill="#00ff00"/>
<path d="M470 440h3v2h2v2h1v2h-2v-1h-2v-2h-2z" fill="#00ff00"/>
<path d="M499 440h3v2h2v2h1v2h-2v-1h-2v-2h-2z" fill="#00ff00"/>
<path d="M254 440h3v2h2v2h1v2h-2v-1h-2v-2h-2z" fill="#00ff00"/>
<path d="M267 440h3v2h2v2h1v2h-2v-1h-2v-2h-2z" fill="#00ff00"/>
<path d="M462 553h3v2h2v2h1v2h-2v-1h-2v-2h-2z" fill="#00ff00"/>
<path d="M476 553h3v2h2v2h1v2h-2v-1h-2v-2h-2z" fill="#00ff00"/>
<path d="M203 551h3v2h2v2h1v2h-2v-1h-2v-2h-2z" fill="#00ff00"/>
<path d="M275 553h3v2h2v2h1v2h-2v-1h-2v-2h-2z" fill="#00ff00"/>
<path d="M627 553h3v2h2v2h1v2h-2v-1h-2v-2h-2z" fill="#00ff00"/>
<path d="M676 553h3v2h2v2h1v2h-2v-1h-2v-2h-2z" fill="#00ff00"/>
<path d="M695 552h3v2h2v2h1v2h-2v-1h-2v-2h-2z" fill="#00ff00"/>
<path d="M469 187h3v2h2v2h1v2h-2v-1h-2v-2h-2z" fill="#00ff00"/>
<path d="M454 190h3v2h2v2h1v2h-2v-1h-2v-2h-2z" fill="#00ff00"/>
<path d="M251 349h3v2h2v2h1v2h-2v-1h-2v-2h-2z" fill="#00ffff"/>
<path d="M270 349h3v2h2v2h1v2h-2v-1h-2v-2h-2z" fill="#00ffff"/>
<path d="M611 553h3v2h2v2h1v2h-2v-1h-2v-2h-2z" fill="#00ffff"/>
<path d="M664 350h3v2h2v2h1v2h-2v-1h-2v-2h-2z" fill="#00ffff"/>
<path d="M664 436h3v2h2v2h1v2h-2v-1h-2v-2h-2z" fill="#00ffff"/>
<path d="M148 310h3v7h-3v-1h2v-5h-2z" fill="#00ff00"/>
<path d="M148 394h3v7h-3v-1h2v-5h-2z" fill="#00ff00"/>
<path d="M148 498h2v1h1v2h-3z" fill="#00ff00"/>
<path d="M455 689h3v1h-2v2h2v1h-3z M470 702h1v3h3v1h-4z" fill="#00ff00"/>
<rect x="300" y="274" width="16" height="3" fill="#000"/>
<rect x="306" y="268" width="4" height="2" fill="#ffff00"/>
<rect x="306" y="280" width="4" height="2" fill="#ffff00"/>
<rect x="307" y="270" width="1" height="10" fill="#ffff00"/>
<rect x="300" y="350" width="20" height="3" fill="#000"/>
<rect x="306" y="344" width="4" height="2" fill="#ffff00"/>
<rect x="306" y="356" width="4" height="2" fill="#ffff00"/>
<rect x="307" y="346" width="1" height="10" fill="#ffff00"/>
<rect x="310" y="344" width="4" height="2" fill="#ffff00"/>
<rect x="310" y="356" width="4" height="2" fill="#ffff00"/>
<rect x="311" y="346" width="1" height="10" fill="#ffff00"/>
<rect x="403" y="441" width="24" height="3" fill="#000"/>
<rect x="411" y="435" width="4" height="2" fill="#ffff00"/>
<rect x="411" y="447" width="4" height="2" fill="#ffff00"/>
<rect x="412" y="437" width="1" height="10" fill="#ffff00"/>
<rect x="415" y="435" width="4" height="2" fill="#ffff00"/>
<rect x="415" y="447" width="4" height="2" fill="#ffff00"/>
<rect x="416" y="437" width="1" height="10" fill="#ffff00"/>
<rect x="419" y="435" width="4" height="2" fill="#ffff00"/>
<rect x="419" y="447" width="4" height="2" fill="#ffff00"/>
<rect x="420" y="437" width="1" height="10" fill="#ffff00"/>
<rect x="421" y="556" width="22" height="3" fill="#000"/>
<rect x="426" y="550" width="4" height="2" fill="#ffff00"/>
<rect x="426" y="562" width="4" height="2" fill="#ffff00"/>
<rect x="427" y="552" width="1" height="10" fill="#ffff00"/>
<path d="M431 551 L433.5 563 L436 551" stroke="#ffff00" stroke-width="1.2" fill="none"/>
<rect x="430" y="550" width="2" height="2" fill="#ffff00"/>
<rect x="520" y="197" width="11" height="3" fill="#000"/>
<path d="M521 193 L523.5 204 L526 193" stroke="#ffff00" stroke-width="1.2" fill="none"/>
<rect x="520" y="192" width="2" height="2" fill="#ffff00"/>
<rect x="527" y="192" width="4" height="2" fill="#ffff00"/>
<rect x="527" y="203" width="4" height="2" fill="#ffff00"/>
<rect x="528" y="194" width="1" height="9" fill="#ffff00"/>
<rect x="286" y="259" width="182" height="1" fill="#ffffff"/>
<rect x="286" y="291" width="182" height="1" fill="#ffffff"/>
</svg></body></html>
